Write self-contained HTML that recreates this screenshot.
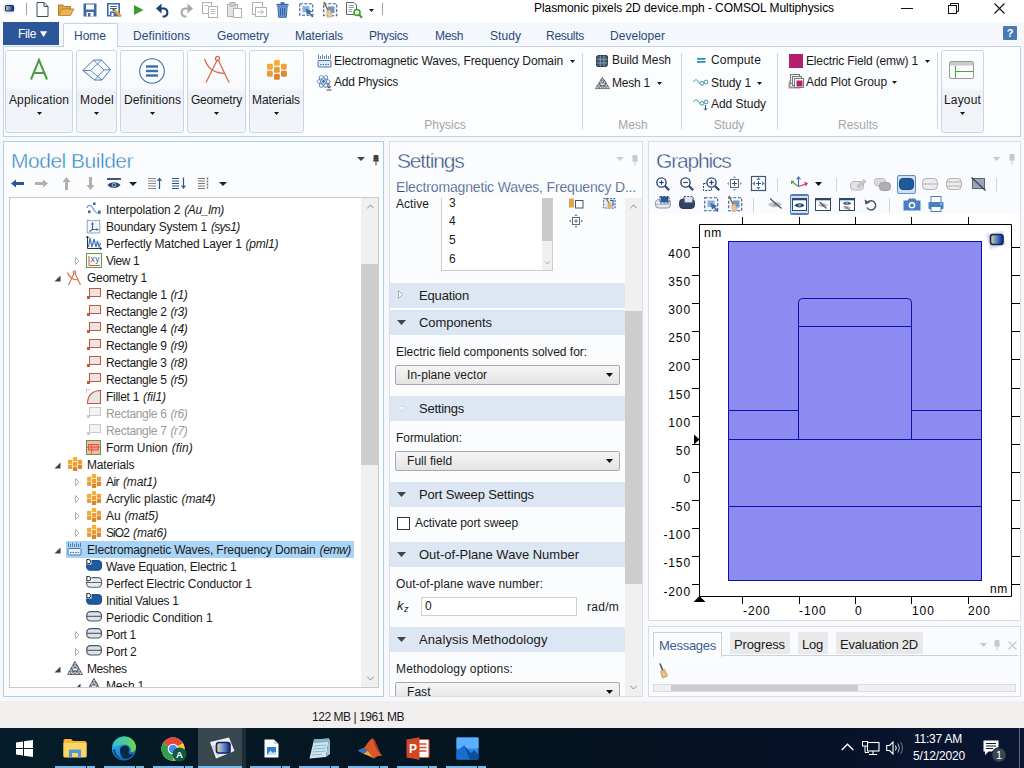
<!DOCTYPE html>
<html><head><meta charset="utf-8"><title>COMSOL</title>
<style>
html,body{margin:0;padding:0;}
body{width:1024px;height:768px;overflow:hidden;position:relative;background:#f6f8fc;font-family:"Liberation Sans",sans-serif;font-size:12px;color:#1a1a1a;}
body div,body svg{position:absolute;}
svg{overflow:visible;}
</style></head><body>
<div style="left:0px;top:0px;width:1024px;height:22px;background:#ffffff;"></div>
<svg style="left:2px;top:2px" width="14" height="13" viewBox="0 0 14 13"><defs><linearGradient id="lg1" x1="0" y1="0.5" x2="1" y2="0.5"><stop offset="0" stop-color="#f5e050"/><stop offset="0.45" stop-color="#5a8fd8"/><stop offset="1" stop-color="#16246a"/></linearGradient></defs><ellipse cx="7" cy="6.5" rx="6.8" ry="6" fill="#eceef3"/><rect x="3.5" y="3.5" width="8" height="5.5" rx="1.3" fill="url(#lg1)" stroke="#16246a" stroke-width="1.1"/></svg>
<div style="left:26px;top:3px;width:1px;height:12px;background:#9aa0a8;"></div>
<svg style="left:36px;top:2px" width="13" height="15" viewBox="0 0 13 15"><path d="M1 0.5H8L12 4.5V14.5H1Z" fill="#fff" stroke="#3b4a63" stroke-width="1"/><path d="M8 0.5V4.5H12" fill="none" stroke="#3b4a63" stroke-width="1"/></svg>
<svg style="left:58px;top:4px" width="17" height="12" viewBox="0 0 17 12"><path d="M0.5 11.5V1H5L6.5 2.5H12.5V5" fill="#e0a346" stroke="#b97a22" stroke-width="1"/><path d="M0.5 11.5L4 5H16L12.5 11.5Z" fill="#eab35a" stroke="#b97a22" stroke-width="0.8"/></svg>
<svg style="left:83px;top:3px" width="14" height="14" viewBox="0 0 14 14"><path d="M0.5 0.5H13.5V13.5H0.5Z" fill="#3e6aa8"/><rect x="3" y="1.5" width="8" height="5" fill="#fff"/><rect x="3.5" y="9" width="7" height="4.5" fill="#fff"/><rect x="5" y="10" width="2.5" height="3.5" fill="#3e6aa8"/></svg>
<svg style="left:107px;top:3px" width="16" height="15" viewBox="0 0 16 15"><path d="M0.8 0.8H12.2V12.7H0.8Z" fill="#fff" stroke="#3e6aa8" stroke-width="1.6"/><path d="M3 3.5H10M3 5.5H10" stroke="#3e6aa8" stroke-width="1"/><rect x="3" y="8.5" width="7" height="4.5" fill="#3e6aa8"/><rect x="4.5" y="10" width="2" height="3" fill="#fff"/><path d="M6.5 6.5L14 13.5" stroke="#e0a346" stroke-width="2.8"/><path d="M5 5L8.2 6L6 8.2Z" fill="#44566b"/></svg>
<svg style="left:134px;top:5px" width="10" height="10" viewBox="0 0 10 10"><path d="M0 0L9.5 5L0 10Z" fill="#3f9a2f"/></svg>
<svg style="left:156px;top:3px" width="14" height="14" viewBox="0 0 14 14"><path d="M3.5 5.5H8.5A4.2 4.2 0 0 1 8.5 13.5H6.5" fill="none" stroke="#1f3f77" stroke-width="2"/><path d="M0 5.5L5.5 0.5V10.5Z" fill="#1f3f77"/></svg>
<svg style="left:179px;top:3px" width="14" height="14" viewBox="0 0 14 14"><path d="M10.5 5.5H5.5A4.2 4.2 0 0 0 5.5 13.5H7.5" fill="none" stroke="#a9a9a9" stroke-width="2"/><path d="M14 5.5L8.5 0.5V10.5Z" fill="#a9a9a9"/></svg>
<svg style="left:202px;top:2px" width="17" height="16" viewBox="0 0 17 16"><rect x="0.5" y="0.5" width="9" height="11" fill="#fff" stroke="#b0b0b0"/><rect x="6.5" y="4.5" width="9" height="11" fill="#fff" stroke="#b0b0b0"/><path d="M8.5 7.5H13.5M8.5 9.5H13.5M8.5 11.5H13.5M2.5 3.5H6" stroke="#b8b8b8"/></svg>
<svg style="left:227px;top:2px" width="16" height="16" viewBox="0 0 16 16"><rect x="0.5" y="2.5" width="10" height="12" fill="#e4e4e4" stroke="#b0b0b0"/><rect x="3" y="0.5" width="5" height="3.5" fill="#d0d0d0" stroke="#b0b0b0"/><rect x="6.5" y="6.5" width="8" height="9" fill="#fff" stroke="#b0b0b0"/></svg>
<svg style="left:252px;top:2px" width="15" height="16" viewBox="0 0 15 16"><rect x="0.5" y="0.5" width="10" height="12" fill="#fff" stroke="#b0b0b0"/><rect x="3.5" y="5.5" width="11" height="9" fill="#fff" stroke="#b0b0b0"/><path d="M5.5 10H11M9 7.5L11.5 10L9 12.5" fill="none" stroke="#b0b0b0"/></svg>
<svg style="left:276px;top:2px" width="13" height="16" viewBox="0 0 13 16"><path d="M1.8 4.2H11.2L10.3 15.3H2.7Z" fill="#6d9ad2" stroke="#3e6aa8" stroke-width="1"/><rect x="0.5" y="1.8" width="12" height="1.8" fill="#3e6aa8"/><rect x="4.5" y="0.2" width="4" height="1.8" fill="#3e6aa8"/><path d="M4.5 6V13.5M6.5 6V13.5M8.5 6V13.5" stroke="#2f5a98" stroke-width="0.9"/></svg>
<svg style="left:299px;top:3px" width="16" height="15" viewBox="0 0 16 15"><rect x="0.7" y="0.7" width="13" height="11.5" fill="#f4f7fb" stroke="#3b5f95" stroke-width="1.1" stroke-dasharray="3 1.6"/><rect x="3.5" y="3.2" width="7" height="6" fill="#8fb0dc"/><path d="M6.5 5.5L13.5 8.5L11 9.5L14.5 13.5L13.2 14.5L9.8 10.5L8 12.3Z" fill="#3a68a8"/></svg>
<svg style="left:323px;top:1px" width="15" height="17" viewBox="0 0 15 17"><rect x="0.7" y="2.7" width="13" height="12" fill="#f4f7fb" stroke="#3b5f95" stroke-width="1.1" stroke-dasharray="3 1.6"/><rect x="5" y="5.5" width="6.5" height="6.5" fill="#6f96cc"/><path d="M0.8 0.8L5.5 10" stroke="#8a6a45" stroke-width="1.5"/><path d="M3.8 10L7 8.5L9.5 15.5L4.5 16.5Z" fill="#e9c79a" stroke="#c09a62" stroke-width="0.6"/></svg>
<svg style="left:346px;top:2px" width="17" height="17" viewBox="0 0 17 17"><path d="M0.5 0.5H8L10.5 3V12.5H0.5Z" fill="#fff" stroke="#5a6270"/><path d="M2.5 3.5H8M2.5 5.5H8M2.5 7.5H6M2.5 9.5H6" stroke="#7a8290" stroke-width="0.8"/><circle cx="11" cy="10.5" r="3" fill="#e9f5e4" stroke="#3f9a2f" stroke-width="1.5"/><path d="M13.2 12.8L16 15.8" stroke="#3f9a2f" stroke-width="2"/></svg>
<svg style="left:368.5px;top:8.5px" width="5" height="3" viewBox="0 0 5 3"><path d="M0 0H5L2.5 3Z" fill="#1a1a1a"/></svg>
<div style="left:382px;top:3px;width:1px;height:12px;background:#9aa0a8;"></div>
<div style="left:534px;top:-1.0px;height:18px;line-height:18px;font-size:12px;color:#000;white-space:nowrap;letter-spacing:-0.070px;">Plasmonic pixels 2D device.mph - COMSOL Multiphysics</div>
<div style="left:901px;top:8px;width:12px;height:1px;background:#111;"></div>
<svg style="left:948px;top:3px" width="11" height="11" viewBox="0 0 11 11"><path d="M2.5 2.5V0.5H10.5V8.5H8.5" fill="none" stroke="#111"/><rect x="0.5" y="2.5" width="8" height="8" fill="none" stroke="#111"/></svg>
<svg style="left:994px;top:3px" width="11" height="11" viewBox="0 0 11 11"><path d="M0.5 0.5L10.5 10.5M10.5 0.5L0.5 10.5" stroke="#111" stroke-width="1.1"/></svg>
<div style="left:0px;top:22px;width:1024px;height:24px;background:#f4f7fc;"></div>
<div style="left:3px;top:22px;width:56px;height:23px;background:#2b569a;"></div>
<div style="left:18px;top:25.0px;height:18px;line-height:18px;font-size:12px;color:#fff;white-space:nowrap;letter-spacing:-0.336px;">File</div>
<svg style="left:40px;top:31px" width="7" height="6" viewBox="0 0 7 6"><path d="M0 0.3H7.2L3.6 6Z" fill="#fff"/></svg>
<div style="left:63px;top:23px;width:55px;height:24px;background:#fcfdfe;border:1px solid #c3d2e6;box-sizing:border-box;border-bottom:none;border-radius:2px 2px 0 0;"></div>
<div style="left:74px;top:27.0px;height:18px;line-height:18px;font-size:12px;color:#2a4a7a;white-space:nowrap;letter-spacing:-0.004px;">Home</div>
<div style="left:133px;top:27.0px;height:18px;line-height:18px;font-size:12px;color:#2a4a7a;white-space:nowrap;letter-spacing:0.088px;">Definitions</div>
<div style="left:217px;top:27.0px;height:18px;line-height:18px;font-size:12px;color:#2a4a7a;white-space:nowrap;letter-spacing:-0.084px;">Geometry</div>
<div style="left:295px;top:27.0px;height:18px;line-height:18px;font-size:12px;color:#2a4a7a;white-space:nowrap;letter-spacing:-0.076px;">Materials</div>
<div style="left:369px;top:27.0px;height:18px;line-height:18px;font-size:12px;color:#2a4a7a;white-space:nowrap;letter-spacing:-0.335px;">Physics</div>
<div style="left:435px;top:27.0px;height:18px;line-height:18px;font-size:12px;color:#2a4a7a;white-space:nowrap;letter-spacing:-0.336px;">Mesh</div>
<div style="left:490px;top:27.0px;height:18px;line-height:18px;font-size:12px;color:#2a4a7a;white-space:nowrap;letter-spacing:0.066px;">Study</div>
<div style="left:546px;top:27.0px;height:18px;line-height:18px;font-size:12px;color:#2a4a7a;white-space:nowrap;letter-spacing:-0.288px;">Results</div>
<div style="left:610px;top:27.0px;height:18px;line-height:18px;font-size:12px;color:#2a4a7a;white-space:nowrap;letter-spacing:0.033px;">Developer</div>
<div style="left:1003px;top:26px;width:14px;height:14px;background:#4a7ab5;border-radius:1px;"></div>
<div style="left:860px;width:300px;text-align:center;top:24.5px;height:17px;line-height:17px;font-size:11px;color:#fff;white-space:nowrap;font-weight:bold;">?</div>
<div style="left:3px;top:46px;width:1018px;height:91px;background:#fcfdfe;border:1px solid #c3d2e6;box-sizing:border-box;z-index:0"></div>
<div style="left:64px;top:46px;width:53px;height:1px;background:#fcfdfe;"></div>
<div style="left:5px;top:50px;width:68px;height:83px;box-sizing:border-box;border:1px solid #c9d6ea;border-radius:3px;background:linear-gradient(#fdfeff 0%,#f7f9fc 45%,#eef1f7 50%,#f3f5f9 100%);"></div>
<div style="left:9px;top:91.0px;height:18px;line-height:18px;font-size:12px;color:#1a1a1a;white-space:nowrap;letter-spacing:0.118px;">Application</div>
<svg style="left:36.5px;top:111.5px" width="5" height="3" viewBox="0 0 5 3"><path d="M0 0H5L2.5 3Z" fill="#1a1a1a"/></svg>
<div style="left:76px;top:50px;width:41px;height:83px;box-sizing:border-box;border:1px solid #c9d6ea;border-radius:3px;background:linear-gradient(#fdfeff 0%,#f7f9fc 45%,#eef1f7 50%,#f3f5f9 100%);"></div>
<div style="left:80px;top:91.0px;height:18px;line-height:18px;font-size:12px;color:#1a1a1a;white-space:nowrap;letter-spacing:0.263px;">Model</div>
<svg style="left:94.0px;top:111.5px" width="5" height="3" viewBox="0 0 5 3"><path d="M0 0H5L2.5 3Z" fill="#1a1a1a"/></svg>
<div style="left:120px;top:50px;width:64px;height:83px;box-sizing:border-box;border:1px solid #c9d6ea;border-radius:3px;background:linear-gradient(#fdfeff 0%,#f7f9fc 45%,#eef1f7 50%,#f3f5f9 100%);"></div>
<div style="left:124px;top:91.0px;height:18px;line-height:18px;font-size:12px;color:#1a1a1a;white-space:nowrap;letter-spacing:0.088px;">Definitions</div>
<svg style="left:149.5px;top:111.5px" width="5" height="3" viewBox="0 0 5 3"><path d="M0 0H5L2.5 3Z" fill="#1a1a1a"/></svg>
<div style="left:187px;top:50px;width:59px;height:83px;box-sizing:border-box;border:1px solid #c9d6ea;border-radius:3px;background:linear-gradient(#fdfeff 0%,#f7f9fc 45%,#eef1f7 50%,#f3f5f9 100%);"></div>
<div style="left:191px;top:91.0px;height:18px;line-height:18px;font-size:12px;color:#1a1a1a;white-space:nowrap;letter-spacing:-0.209px;">Geometry</div>
<svg style="left:214.0px;top:111.5px" width="5" height="3" viewBox="0 0 5 3"><path d="M0 0H5L2.5 3Z" fill="#1a1a1a"/></svg>
<div style="left:249px;top:50px;width:55px;height:83px;box-sizing:border-box;border:1px solid #c9d6ea;border-radius:3px;background:linear-gradient(#fdfeff 0%,#f7f9fc 45%,#eef1f7 50%,#f3f5f9 100%);"></div>
<div style="left:252px;top:91.0px;height:18px;line-height:18px;font-size:12px;color:#1a1a1a;white-space:nowrap;letter-spacing:-0.076px;">Materials</div>
<svg style="left:274.0px;top:111.5px" width="5" height="3" viewBox="0 0 5 3"><path d="M0 0H5L2.5 3Z" fill="#1a1a1a"/></svg>
<div style="left:941px;top:50px;width:43px;height:83px;box-sizing:border-box;border:1px solid #c9d6ea;border-radius:3px;background:linear-gradient(#fdfeff 0%,#f7f9fc 45%,#eef1f7 50%,#f3f5f9 100%);"></div>
<div style="left:944px;top:91.0px;height:18px;line-height:18px;font-size:12px;color:#1a1a1a;white-space:nowrap;letter-spacing:0.164px;">Layout</div>
<svg style="left:960.0px;top:111.5px" width="5" height="3" viewBox="0 0 5 3"><path d="M0 0H5L2.5 3Z" fill="#1a1a1a"/></svg>
<svg style="left:30px;top:59px" width="19" height="22" viewBox="0 0 19 22"><path d="M1 20.5L9 1L17 20.5M3.8 14H14.2" fill="none" stroke="#4d9a42" stroke-width="2" stroke-linejoin="miter"/></svg>
<svg style="left:82px;top:59px" width="30" height="22" viewBox="0 0 30 22"><g fill="none" stroke="#4a78b0" stroke-width="1" stroke-linejoin="round"><path d="M0.8 11.5L11.5 1.2L19.5 1L28.5 10.5L20 21H12.5Z"/><path d="M0.8 11.5L8.5 11.5L20 21M8.5 11.5L19.5 1M11.5 1.2L22 11L28.5 10.5M22 11L12.5 21" stroke-width="0.9"/></g></svg>
<svg style="left:139px;top:58px" width="27" height="27" viewBox="0 0 27 27"><circle cx="13" cy="13" r="12.3" fill="#fdfeff" stroke="#3e6fb0" stroke-width="1.1"/><path d="M7 8.5H19M7 13H19M7 17.5H19" stroke="#3e6fb0" stroke-width="2.4"/></svg>
<svg style="left:203px;top:55px" width="30" height="30" viewBox="0 0 30 30"><g fill="none" stroke="#d9694a" stroke-width="1.3"><circle cx="14.5" cy="3.5" r="2"/><path d="M14 5.5L3 27.5M15.5 5.5L26 27.5"/><path d="M1.5 4C5 14 11 18 22 18.5"/></g></svg>
<svg style="left:267px;top:60px" width="21" height="21" viewBox="0 0 21 21"><rect x="7.00" y="0.00" width="5.8" height="5.8" rx="1.16" fill="#f5b030"/><rect x="0.00" y="3.85" width="5.8" height="5.8" rx="1.16" fill="#f3ab38"/><rect x="14.00" y="3.85" width="5.8" height="5.8" rx="1.16" fill="#f0a03c"/><rect x="7.00" y="7.00" width="5.8" height="5.8" rx="1.16" fill="#f09a36"/><rect x="0.00" y="10.85" width="5.8" height="5.8" rx="1.16" fill="#ec9a3a"/><rect x="14.00" y="10.85" width="5.8" height="5.8" rx="1.16" fill="#dc8a30"/><rect x="7.00" y="14.00" width="5.8" height="5.8" rx="1.16" fill="#dc8428"/></svg>
<svg style="left:949px;top:61px" width="26" height="19" viewBox="0 0 26 19"><rect x="0.5" y="0.5" width="24" height="17" rx="1.5" fill="#fbfbfb" stroke="#9a9a9a"/><rect x="1" y="1" width="23" height="3.5" fill="#c9c9c9"/><path d="M6.5 5V17M6.5 10.5H24" stroke="#4da546" stroke-width="1.1" fill="none"/></svg>
<div style="left:582px;top:53px;width:1px;height:76px;background:#d0d7e2;"></div>
<div style="left:681px;top:53px;width:1px;height:76px;background:#d0d7e2;"></div>
<div style="left:777px;top:53px;width:1px;height:76px;background:#d0d7e2;"></div>
<div style="left:937px;top:53px;width:1px;height:76px;background:#d0d7e2;"></div>
<svg style="left:317px;top:54px" width="15" height="14" viewBox="0 0 15 14"><g stroke="#4a78b0" fill="none"><path d="M1.5 0.5V5M3.5 2V5M5.5 0.5V5M7.5 2V5M9.5 0.5V5M11.5 2V5M13.5 0.5V5" stroke-width="0.9"/><rect x="1" y="6.5" width="13" height="6.5" rx="1" fill="#dfe9f6"/><path d="M3 10.5H12" stroke-dasharray="1.5 1"/></g></svg>
<div style="left:334px;top:52.0px;height:18px;line-height:18px;font-size:12px;color:#1a1a1a;white-space:nowrap;letter-spacing:-0.119px;">Electromagnetic Waves, Frequency Domain</div>
<svg style="left:569.5px;top:60.0px" width="5" height="3" viewBox="0 0 5 3"><path d="M0 0H5L2.5 3Z" fill="#1a1a1a"/></svg>
<svg style="left:316px;top:74px" width="17" height="17" viewBox="0 0 17 17"><g fill="none" stroke="#5b86b8" stroke-width="0.9"><ellipse cx="7.5" cy="7.5" rx="6.5" ry="2.6"/><ellipse cx="7.5" cy="7.5" rx="6.5" ry="2.6" transform="rotate(60 7.5 7.5)"/><ellipse cx="7.5" cy="7.5" rx="6.5" ry="2.6" transform="rotate(-60 7.5 7.5)"/></g><circle cx="7.5" cy="7.5" r="1.4" fill="#3e6aa8"/><path d="M13 9V14M11 12.2L13 14.2L15 12.2M10.5 16H15.5" stroke="#444" fill="none" stroke-width="1"/></svg>
<div style="left:334px;top:73.0px;height:18px;line-height:18px;font-size:12px;color:#1a1a1a;white-space:nowrap;letter-spacing:-0.183px;">Add Physics</div>
<div style="left:295px;width:300px;text-align:center;top:116.0px;height:18px;line-height:18px;font-size:12px;color:#a6a6a6;white-space:nowrap;">Physics</div>
<svg style="left:596px;top:55px" width="12" height="12" viewBox="0 0 12 12"><path d="M0.5 2.5Q0.5 0.5 2.5 0.5H10Q11.5 0.5 11.5 2V9.5Q11.5 11.5 9.5 11.5H2Q0.5 11.5 0.5 10Z" fill="#44566b" stroke="#2d3b4d"/><path d="M4.3 0.5V11.5M8 0.5V11.5M0.5 4.3H11.5M0.5 8H11.5" stroke="#93a6bc" stroke-width="0.8"/></svg>
<div style="left:612px;top:51.0px;height:18px;line-height:18px;font-size:12px;color:#1a1a1a;white-space:nowrap;letter-spacing:-0.036px;">Build Mesh</div>
<svg style="left:594.5px;top:76.5px" width="15" height="12" viewBox="0 0 15 12"><g fill="none" stroke="#555e6b" stroke-width="0.8"><path d="M7.5 0.4L14.6 11.6H0.4Z" fill="#e6e9ee"/><path d="M3.95 6H11.05L7.5 11.6L3.95 6M7.5 0.4L5.7 3.2H9.3L7.5 6L5.7 3.2M9.3 3.2L11.05 6L9.3 8.8H5.7L3.95 6M2.2 8.8H12.8M2.2 8.8L3.95 11.6L5.7 8.8M9.3 8.8L11.05 11.6L12.8 8.8"/></g></svg>
<div style="left:612px;top:74.0px;height:18px;line-height:18px;font-size:12px;color:#1a1a1a;white-space:nowrap;letter-spacing:-0.224px;">Mesh 1</div>
<svg style="left:656.5px;top:82.0px" width="5" height="3" viewBox="0 0 5 3"><path d="M0 0H5L2.5 3Z" fill="#1a1a1a"/></svg>
<div style="left:483px;width:300px;text-align:center;top:116.0px;height:18px;line-height:18px;font-size:12px;color:#a6a6a6;white-space:nowrap;">Mesh</div>
<svg style="left:697px;top:58px" width="9" height="6" viewBox="0 0 9 6"><path d="M0 0.9H8.5M0 3.8H8.5" stroke="#2a8fb5" stroke-width="1.7"/></svg>
<div style="left:711px;top:51.0px;height:18px;line-height:18px;font-size:12px;color:#1a1a1a;white-space:nowrap;letter-spacing:0.188px;">Compute</div>
<svg style="left:693px;top:77px" width="17" height="17" viewBox="0 0 17 17"><g fill="none" stroke="#3a9aa8" stroke-width="1"><path d="M0.5 5C2 2 4 2 5.5 5C6 6 6.5 6.5 7 6.5"/><circle cx="9" cy="6.3" r="1.9"/><circle cx="13" cy="5" r="1.9"/></g></svg>
<div style="left:711px;top:74.0px;height:18px;line-height:18px;font-size:12px;color:#1a1a1a;white-space:nowrap;letter-spacing:-0.096px;">Study 1</div>
<svg style="left:756.5px;top:82.0px" width="5" height="3" viewBox="0 0 5 3"><path d="M0 0H5L2.5 3Z" fill="#1a1a1a"/></svg>
<svg style="left:693px;top:97px" width="17" height="17" viewBox="0 0 17 17"><g fill="none" stroke="#3a9aa8" stroke-width="1"><path d="M0.5 5C2 2 4 2 5.5 5C6 6 6.5 6.5 7 6.5"/><circle cx="9" cy="6.3" r="1.9"/><circle cx="13" cy="5" r="1.9"/></g><path d="M12.5 8V13M10.9 11.3L12.5 13.2L14.1 11.3" stroke="#44566b" fill="none" stroke-width="1"/></svg>
<div style="left:711px;top:95.0px;height:18px;line-height:18px;font-size:12px;color:#1a1a1a;white-space:nowrap;letter-spacing:-0.038px;">Add Study</div>
<div style="left:579px;width:300px;text-align:center;top:116.0px;height:18px;line-height:18px;font-size:12px;color:#a6a6a6;white-space:nowrap;">Study</div>
<div style="left:789px;top:54px;width:14px;height:14px;background:#b5206e;"></div>
<div style="left:806px;top:52.0px;height:18px;line-height:18px;font-size:12px;color:#1a1a1a;white-space:nowrap;letter-spacing:-0.153px;">Electric Field (emw) 1</div>
<svg style="left:924.5px;top:60.0px" width="5" height="3" viewBox="0 0 5 3"><path d="M0 0H5L2.5 3Z" fill="#1a1a1a"/></svg>
<svg style="left:788px;top:74px" width="16" height="15" viewBox="0 0 16 15"><path d="M0.5 9.5L2.5 4.5V12.5H12V14.5H0.5Z" fill="#9a9a9a"/><rect x="2.5" y="0.5" width="9" height="9" fill="#f2f2f2" stroke="#7a7a7a"/><rect x="4.5" y="2.5" width="9" height="9" fill="#f2f2f2" stroke="#7a7a7a"/><rect x="6.5" y="4.5" width="9" height="9" fill="#fff" stroke="#7a7a7a"/><rect x="8.5" y="6.5" width="6" height="6" fill="#b5206e"/></svg>
<div style="left:806px;top:73.0px;height:18px;line-height:18px;font-size:12px;color:#1a1a1a;white-space:nowrap;letter-spacing:-0.073px;">Add Plot Group</div>
<svg style="left:891.5px;top:81.0px" width="5" height="3" viewBox="0 0 5 3"><path d="M0 0H5L2.5 3Z" fill="#1a1a1a"/></svg>
<div style="left:708px;width:300px;text-align:center;top:116.0px;height:18px;line-height:18px;font-size:12px;color:#a6a6a6;white-space:nowrap;">Results</div>
<div style="left:3px;top:141px;width:381px;height:556px;background:#fbfcfe;border:1px solid #aecdea;box-sizing:border-box;"></div>
<div style="left:11px;top:146.5px;height:27px;line-height:27px;font-size:21px;color:#2a84c2;white-space:nowrap;letter-spacing:-0.490px;-webkit-text-stroke:0.45px #fbfcfe;">Model Builder</div>
<svg style="left:357.0px;top:157.0px" width="8" height="4" viewBox="0 0 8 4"><path d="M0 0H8L4.0 4Z" fill="#444"/></svg>
<svg style="left:372.5px;top:154.5px" width="6" height="11" viewBox="0 0 6 11"><path d="M1 0.5H5V5.5H1ZM0 6H6M3 6V10.5" stroke="#444" fill="#444" stroke-width="1"/></svg>
<svg style="left:11px;top:179px" width="13" height="13" viewBox="0 0 13 13"><path d="M0 4.5L5 0.5V3H13V6H5V8.5Z" fill="#2d5596"/></svg>
<svg style="left:35px;top:179px" width="13" height="13" viewBox="0 0 13 13"><path d="M13 4.5L8 0.5V3H0V6H8V8.5Z" fill="#b0b0b0"/></svg>
<svg style="left:62px;top:177px" width="13" height="13" viewBox="0 0 13 13"><path d="M4.5 0L0.5 5H3V13H6V5H8.5Z" fill="#b0b0b0"/></svg>
<svg style="left:86px;top:177px" width="13" height="13" viewBox="0 0 13 13"><path d="M4.5 13L0.5 8H3V0H6V8H8.5Z" fill="#b0b0b0"/></svg>
<svg style="left:107px;top:178px" width="14" height="11" viewBox="0 0 14 11"><path d="M0 1H14" stroke="#2b4770" stroke-width="1.8"/><path d="M0.5 7C3.5 3.2 10.5 3.2 13.5 7C10.5 10.8 3.5 10.8 0.5 7Z" fill="#2b4770"/><circle cx="7" cy="7" r="2.3" fill="#8fa8cc"/><circle cx="7" cy="7" r="1.2" fill="#2b4770"/></svg>
<svg style="left:129.0px;top:182.0px" width="8" height="4" viewBox="0 0 8 4"><path d="M0 0H8L4.0 4Z" fill="#222"/></svg>
<svg style="left:148px;top:177px" width="14" height="12" viewBox="0 0 14 12"><path d="M0 1.5H8M0 4H8M0 6.5H8M0 9H8M0 11.5H8" stroke="#8a8a8a" stroke-width="1"/><path d="M11.5 12V2M9.5 4L11.5 1.5L13.5 4" stroke="#2d5596" fill="none" stroke-width="1.2"/></svg>
<svg style="left:172px;top:177px" width="14" height="12" viewBox="0 0 14 12"><path d="M0 1.5H8M0 4H8M0 6.5H8M0 9H8M0 11.5H8" stroke="#2d5596" stroke-width="1.2" stroke-dasharray="7 1"/><path d="M11.5 0.5V10.5M9.5 8.5L11.5 11L13.5 8.5" stroke="#2d5596" fill="none" stroke-width="1.2"/></svg>
<svg style="left:198px;top:177px" width="11" height="12" viewBox="0 0 11 12"><path d="M0 1.5H7M0 4H7M0 6.5H7M0 9H7M0 11.5H7" stroke="#777" stroke-width="1"/><path d="M9.5 0.5V12" stroke="#777" stroke-width="1.5" stroke-dasharray="2 1"/></svg>
<svg style="left:218.5px;top:182.0px" width="8" height="4" viewBox="0 0 8 4"><path d="M0 0H8L4.0 4Z" fill="#222"/></svg>
<div style="left:9px;top:197px;width:370px;height:491px;background:#ffffff;border:1px solid #c6cad0;box-sizing:border-box;"></div>
<div style="left:361px;top:198px;width:17px;height:489px;background:#f0f0f0;"></div>
<div style="left:361px;top:264px;width:17px;height:201px;background:#cdcdcd;"></div>
<svg style="left:366.5px;top:204px" width="7" height="5" viewBox="0 0 7 5"><path d="M0.3 4.2L3.5 1L6.7 4.2" fill="none" stroke="#8a8a8a" stroke-width="1"/></svg>
<svg style="left:366.5px;top:676px" width="7" height="5" viewBox="0 0 7 5"><path d="M0.3 0.8L3.5 4L6.7 0.8" fill="none" stroke="#8a8a8a" stroke-width="1"/></svg>
<div style="left:10px;top:198px;width:351px;height:489px;overflow:hidden">
<svg style="left:76px;top:4px" width="16" height="14" viewBox="0 0 16 14"><path d="M0.5 6C2 3 4.5 2.5 6.5 5.5C8.5 9 10 12 15 11.5" fill="none" stroke="#7aa3d4" stroke-width="1.3"/><rect x="7" y="0.5" width="2.6" height="2.6" fill="#3e6aa8"/><rect x="2" y="8.5" width="2.6" height="2.6" fill="#3e6aa8"/><rect x="12" y="8.5" width="2.6" height="2.6" fill="#3e6aa8"/></svg>
<div style="left:96px;top:3.1px;height:18px;line-height:18px;font-size:12px;color:#1a1a1a;white-space:nowrap;letter-spacing:-0.115px;">Interpolation 2</div>
<div style="left:174.3px;top:3.1px;height:18px;line-height:18px;font-size:12px;color:#1a1a1a;white-space:nowrap;letter-spacing:-0.439px;font-style:italic;">(Au_Im)</div>
<svg style="left:76px;top:21px" width="15" height="15" viewBox="0 0 15 15"><path d="M1.5 1C1 5 1 10 1.5 14H13.5C14 10 14 5 13.5 1C10 2 5 2 1.5 1Z" fill="#f4f6fa" stroke="#8b97a8" stroke-width="0.9"/><path d="M6.5 4.5V10.5H11.5" fill="none" stroke="#3e6aa8" stroke-width="1.2"/><path d="M6.5 3L5 5.5H8ZM13 10.5L10.5 9V12Z" fill="#3e6aa8"/><path d="M6.5 10.5L3.5 12.5" stroke="#3e6aa8" stroke-width="1.1"/></svg>
<div style="left:96px;top:20.1px;height:18px;line-height:18px;font-size:12px;color:#1a1a1a;white-space:nowrap;letter-spacing:-0.223px;">Boundary System 1</div>
<div style="left:200.9px;top:20.1px;height:18px;line-height:18px;font-size:12px;color:#1a1a1a;white-space:nowrap;letter-spacing:-0.679px;font-style:italic;">(sys1)</div>
<svg style="left:76px;top:38px" width="16" height="15" viewBox="0 0 16 15"><path d="M1.5 0V12.5M1.5 12.5H15.5" stroke="#333" stroke-width="1" fill="none"/><path d="M2.5 11L4 2L6 11L8 3L10 11L11.5 5L13 11L14.5 7" fill="none" stroke="#3e78c0" stroke-width="1.2"/><path d="M0 2L1.5 0L3 2M14 11L15.8 12.5L14 14" fill="none" stroke="#333" stroke-width="0.8"/></svg>
<div style="left:96px;top:37.1px;height:18px;line-height:18px;font-size:12px;color:#1a1a1a;white-space:nowrap;letter-spacing:-0.150px;">Perfectly Matched Layer 1</div>
<div style="left:235.6px;top:37.1px;height:18px;line-height:18px;font-size:12px;color:#1a1a1a;white-space:nowrap;letter-spacing:-0.219px;font-style:italic;">(pml1)</div>
<svg style="left:65px;top:58.5px" width="5" height="8" viewBox="0 0 5 8"><path d="M0.5 0.5L4 4L0.5 7.5Z" fill="#fff" stroke="#a6a6a6" stroke-width="0.9"/></svg>
<svg style="left:76px;top:55px" width="16" height="15" viewBox="0 0 16 15"><rect x="0.5" y="0.5" width="15" height="14" fill="#f8fbf6" stroke="#5a9a4a" stroke-width="1"/><path d="M3 3V12.5H14" fill="none" stroke="#c8553d" stroke-width="1"/><text x="4.5" y="9" font-size="8.5" fill="#3e5a9a" font-family="Liberation Sans" letter-spacing="0.5">xy</text></svg>
<div style="left:96px;top:54.1px;height:18px;line-height:18px;font-size:12px;color:#1a1a1a;white-space:nowrap;letter-spacing:-0.449px;">View 1</div>
<svg style="left:44px;top:76.5px" width="7" height="7" viewBox="0 0 7 7"><path d="M6.5 0.5V6.5H0.5Z" fill="#404040"/></svg>
<svg style="left:57px;top:72px" width="15" height="16" viewBox="0 0 15 16"><g fill="none" stroke="#d9694a" stroke-width="1.1"><circle cx="7.5" cy="2" r="1.3"/><path d="M7 3.3L1.5 15M8 3.3L13.5 15"/><path d="M0.5 2.5C2.5 8 6 10 11.5 10"/></g></svg>
<div style="left:77px;top:71.1px;height:18px;line-height:18px;font-size:12px;color:#1a1a1a;white-space:nowrap;letter-spacing:-0.287px;">Geometry 1</div>
<svg style="left:76px;top:89px" width="15" height="13" viewBox="0 0 15 13"><rect x="3.5" y="1.5" width="11" height="8" fill="#ece4e2" stroke="#c8553d" stroke-width="1"/><rect x="1" y="9" width="3" height="3" fill="#c8553d"/></svg>
<div style="left:96px;top:88.1px;height:18px;line-height:18px;font-size:12px;color:#1a1a1a;white-space:nowrap;letter-spacing:-0.321px;">Rectangle 1</div>
<div style="left:160.5px;top:88.1px;height:18px;line-height:18px;font-size:12px;color:#1a1a1a;white-space:nowrap;letter-spacing:-0.468px;font-style:italic;">(r1)</div>
<svg style="left:76px;top:106px" width="15" height="13" viewBox="0 0 15 13"><rect x="3.5" y="1.5" width="11" height="8" fill="#ece4e2" stroke="#c8553d" stroke-width="1"/><rect x="1" y="9" width="3" height="3" fill="#c8553d"/></svg>
<div style="left:96px;top:105.1px;height:18px;line-height:18px;font-size:12px;color:#1a1a1a;white-space:nowrap;letter-spacing:-0.321px;">Rectangle 2</div>
<div style="left:160.5px;top:105.1px;height:18px;line-height:18px;font-size:12px;color:#1a1a1a;white-space:nowrap;letter-spacing:-0.468px;font-style:italic;">(r3)</div>
<svg style="left:76px;top:123px" width="15" height="13" viewBox="0 0 15 13"><rect x="3.5" y="1.5" width="11" height="8" fill="#ece4e2" stroke="#c8553d" stroke-width="1"/><rect x="1" y="9" width="3" height="3" fill="#c8553d"/></svg>
<div style="left:96px;top:122.1px;height:18px;line-height:18px;font-size:12px;color:#1a1a1a;white-space:nowrap;letter-spacing:-0.321px;">Rectangle 4</div>
<div style="left:160.5px;top:122.1px;height:18px;line-height:18px;font-size:12px;color:#1a1a1a;white-space:nowrap;letter-spacing:-0.468px;font-style:italic;">(r4)</div>
<svg style="left:76px;top:140px" width="15" height="13" viewBox="0 0 15 13"><rect x="3.5" y="1.5" width="11" height="8" fill="#ece4e2" stroke="#c8553d" stroke-width="1"/><rect x="1" y="9" width="3" height="3" fill="#c8553d"/></svg>
<div style="left:96px;top:139.1px;height:18px;line-height:18px;font-size:12px;color:#1a1a1a;white-space:nowrap;letter-spacing:-0.321px;">Rectangle 9</div>
<div style="left:160.5px;top:139.1px;height:18px;line-height:18px;font-size:12px;color:#1a1a1a;white-space:nowrap;letter-spacing:-0.468px;font-style:italic;">(r9)</div>
<svg style="left:76px;top:157px" width="15" height="13" viewBox="0 0 15 13"><rect x="3.5" y="1.5" width="11" height="8" fill="#ece4e2" stroke="#c8553d" stroke-width="1"/><rect x="1" y="9" width="3" height="3" fill="#c8553d"/></svg>
<div style="left:96px;top:156.1px;height:18px;line-height:18px;font-size:12px;color:#1a1a1a;white-space:nowrap;letter-spacing:-0.321px;">Rectangle 3</div>
<div style="left:160.5px;top:156.1px;height:18px;line-height:18px;font-size:12px;color:#1a1a1a;white-space:nowrap;letter-spacing:-0.468px;font-style:italic;">(r8)</div>
<svg style="left:76px;top:174px" width="15" height="13" viewBox="0 0 15 13"><rect x="3.5" y="1.5" width="11" height="8" fill="#ece4e2" stroke="#c8553d" stroke-width="1"/><rect x="1" y="9" width="3" height="3" fill="#c8553d"/></svg>
<div style="left:96px;top:173.1px;height:18px;line-height:18px;font-size:12px;color:#1a1a1a;white-space:nowrap;letter-spacing:-0.321px;">Rectangle 5</div>
<div style="left:160.5px;top:173.1px;height:18px;line-height:18px;font-size:12px;color:#1a1a1a;white-space:nowrap;letter-spacing:-0.468px;font-style:italic;">(r5)</div>
<svg style="left:76px;top:191px" width="15" height="15" viewBox="0 0 15 15"><path d="M1.5 14.5C1.5 6.5 6.5 1.5 14.5 1.5V14.5Z" fill="#e6e6e6" stroke="#c8553d" stroke-width="1.1"/><path d="M0.5 0.5V4.5M0.5 0.5H4.5" stroke="#888" stroke-width="0.8" stroke-dasharray="1 1" fill="none"/></svg>
<div style="left:96px;top:190.1px;height:18px;line-height:18px;font-size:12px;color:#1a1a1a;white-space:nowrap;letter-spacing:-0.280px;">Fillet 1</div>
<div style="left:133.1px;top:190.1px;height:18px;line-height:18px;font-size:12px;color:#1a1a1a;white-space:nowrap;letter-spacing:-0.091px;font-style:italic;">(fil1)</div>
<svg style="left:76px;top:208px" width="15" height="13" viewBox="0 0 15 13"><rect x="3.5" y="1.5" width="11" height="8" fill="#f2f2f2" stroke="#c9c9c9" stroke-width="1"/><rect x="1" y="9" width="3" height="3" fill="#c9c9c9"/></svg>
<div style="left:96px;top:207.1px;height:18px;line-height:18px;font-size:12px;color:#9a9a9a;white-space:nowrap;letter-spacing:-0.321px;">Rectangle 6</div>
<div style="left:160.5px;top:207.1px;height:18px;line-height:18px;font-size:12px;color:#9a9a9a;white-space:nowrap;letter-spacing:-0.468px;font-style:italic;">(r6)</div>
<svg style="left:76px;top:225px" width="15" height="13" viewBox="0 0 15 13"><rect x="3.5" y="1.5" width="11" height="8" fill="#f2f2f2" stroke="#c9c9c9" stroke-width="1"/><rect x="1" y="9" width="3" height="3" fill="#c9c9c9"/></svg>
<div style="left:96px;top:224.1px;height:18px;line-height:18px;font-size:12px;color:#9a9a9a;white-space:nowrap;letter-spacing:-0.321px;">Rectangle 7</div>
<div style="left:160.5px;top:224.1px;height:18px;line-height:18px;font-size:12px;color:#9a9a9a;white-space:nowrap;letter-spacing:-0.468px;font-style:italic;">(r7)</div>
<svg style="left:76px;top:242px" width="15" height="15" viewBox="0 0 15 15"><rect x="0.5" y="0.5" width="14" height="14" fill="#f5b8aa" stroke="#5a9a4a" stroke-width="1"/><rect x="2.5" y="4.5" width="10" height="5.5" fill="#f09a88" stroke="#d9543a" stroke-width="0.9"/><path d="M5.5 4.5V14M1 7.2H14" stroke="#d9543a" stroke-width="0.8"/></svg>
<div style="left:96px;top:241.1px;height:18px;line-height:18px;font-size:12px;color:#1a1a1a;white-space:nowrap;letter-spacing:-0.099px;">Form Union</div>
<div style="left:161.7px;top:241.1px;height:18px;line-height:18px;font-size:12px;color:#1a1a1a;white-space:nowrap;letter-spacing:0.086px;font-style:italic;">(fin)</div>
<svg style="left:44px;top:263.5px" width="7" height="7" viewBox="0 0 7 7"><path d="M6.5 0.5V6.5H0.5Z" fill="#404040"/></svg>
<svg style="left:58px;top:259px" width="15" height="15" viewBox="0 0 15 15"><rect x="4.90" y="0.00" width="4.3" height="4.3" rx="0.86" fill="#f5b030"/><rect x="0.00" y="2.70" width="4.3" height="4.3" rx="0.86" fill="#f3ab38"/><rect x="9.80" y="2.70" width="4.3" height="4.3" rx="0.86" fill="#f0a03c"/><rect x="4.90" y="4.90" width="4.3" height="4.3" rx="0.86" fill="#f09a36"/><rect x="0.00" y="7.60" width="4.3" height="4.3" rx="0.86" fill="#ec9a3a"/><rect x="9.80" y="7.60" width="4.3" height="4.3" rx="0.86" fill="#dc8a30"/><rect x="4.90" y="9.80" width="4.3" height="4.3" rx="0.86" fill="#dc8428"/></svg>
<div style="left:77px;top:258.1px;height:18px;line-height:18px;font-size:12px;color:#1a1a1a;white-space:nowrap;letter-spacing:-0.154px;">Materials</div>
<svg style="left:65px;top:279.5px" width="5" height="8" viewBox="0 0 5 8"><path d="M0.5 0.5L4 4L0.5 7.5Z" fill="#fff" stroke="#a6a6a6" stroke-width="0.9"/></svg>
<svg style="left:77px;top:276px" width="15" height="15" viewBox="0 0 15 15"><rect x="4.90" y="0.00" width="4.3" height="4.3" rx="0.86" fill="#f5b030"/><rect x="0.00" y="2.70" width="4.3" height="4.3" rx="0.86" fill="#f3ab38"/><rect x="9.80" y="2.70" width="4.3" height="4.3" rx="0.86" fill="#f0a03c"/><rect x="4.90" y="4.90" width="4.3" height="4.3" rx="0.86" fill="#f09a36"/><rect x="0.00" y="7.60" width="4.3" height="4.3" rx="0.86" fill="#ec9a3a"/><rect x="9.80" y="7.60" width="4.3" height="4.3" rx="0.86" fill="#dc8a30"/><rect x="4.90" y="9.80" width="4.3" height="4.3" rx="0.86" fill="#dc8428"/></svg>
<div style="left:96px;top:275.1px;height:18px;line-height:18px;font-size:12px;color:#1a1a1a;white-space:nowrap;letter-spacing:-0.591px;">Air</div>
<div style="left:112.9px;top:275.1px;height:18px;line-height:18px;font-size:12px;color:#1a1a1a;white-space:nowrap;letter-spacing:-0.112px;font-style:italic;">(mat1)</div>
<svg style="left:65px;top:296.5px" width="5" height="8" viewBox="0 0 5 8"><path d="M0.5 0.5L4 4L0.5 7.5Z" fill="#fff" stroke="#a6a6a6" stroke-width="0.9"/></svg>
<svg style="left:77px;top:293px" width="15" height="15" viewBox="0 0 15 15"><rect x="4.90" y="0.00" width="4.3" height="4.3" rx="0.86" fill="#f5b030"/><rect x="0.00" y="2.70" width="4.3" height="4.3" rx="0.86" fill="#f3ab38"/><rect x="9.80" y="2.70" width="4.3" height="4.3" rx="0.86" fill="#f0a03c"/><rect x="4.90" y="4.90" width="4.3" height="4.3" rx="0.86" fill="#f09a36"/><rect x="0.00" y="7.60" width="4.3" height="4.3" rx="0.86" fill="#ec9a3a"/><rect x="9.80" y="7.60" width="4.3" height="4.3" rx="0.86" fill="#dc8a30"/><rect x="4.90" y="9.80" width="4.3" height="4.3" rx="0.86" fill="#dc8428"/></svg>
<div style="left:96px;top:292.1px;height:18px;line-height:18px;font-size:12px;color:#1a1a1a;white-space:nowrap;letter-spacing:-0.079px;">Acrylic plastic</div>
<div style="left:171.5px;top:292.1px;height:18px;line-height:18px;font-size:12px;color:#1a1a1a;white-space:nowrap;letter-spacing:-0.112px;font-style:italic;">(mat4)</div>
<svg style="left:65px;top:313.5px" width="5" height="8" viewBox="0 0 5 8"><path d="M0.5 0.5L4 4L0.5 7.5Z" fill="#fff" stroke="#a6a6a6" stroke-width="0.9"/></svg>
<svg style="left:77px;top:310px" width="15" height="15" viewBox="0 0 15 15"><rect x="4.90" y="0.00" width="4.3" height="4.3" rx="0.86" fill="#f5b030"/><rect x="0.00" y="2.70" width="4.3" height="4.3" rx="0.86" fill="#f3ab38"/><rect x="9.80" y="2.70" width="4.3" height="4.3" rx="0.86" fill="#f0a03c"/><rect x="4.90" y="4.90" width="4.3" height="4.3" rx="0.86" fill="#f09a36"/><rect x="0.00" y="7.60" width="4.3" height="4.3" rx="0.86" fill="#ec9a3a"/><rect x="9.80" y="7.60" width="4.3" height="4.3" rx="0.86" fill="#dc8a30"/><rect x="4.90" y="9.80" width="4.3" height="4.3" rx="0.86" fill="#dc8428"/></svg>
<div style="left:96px;top:309.1px;height:18px;line-height:18px;font-size:12px;color:#1a1a1a;white-space:nowrap;letter-spacing:-0.110px;">Au</div>
<div style="left:114.451796875px;top:309.1px;height:18px;line-height:18px;font-size:12px;color:#1a1a1a;white-space:nowrap;letter-spacing:-0.112px;font-style:italic;">(mat5)</div>
<svg style="left:65px;top:330.5px" width="5" height="8" viewBox="0 0 5 8"><path d="M0.5 0.5L4 4L0.5 7.5Z" fill="#fff" stroke="#a6a6a6" stroke-width="0.9"/></svg>
<svg style="left:77px;top:327px" width="15" height="15" viewBox="0 0 15 15"><rect x="4.90" y="0.00" width="4.3" height="4.3" rx="0.86" fill="#f5b030"/><rect x="0.00" y="2.70" width="4.3" height="4.3" rx="0.86" fill="#f3ab38"/><rect x="9.80" y="2.70" width="4.3" height="4.3" rx="0.86" fill="#f0a03c"/><rect x="4.90" y="4.90" width="4.3" height="4.3" rx="0.86" fill="#f09a36"/><rect x="0.00" y="7.60" width="4.3" height="4.3" rx="0.86" fill="#ec9a3a"/><rect x="9.80" y="7.60" width="4.3" height="4.3" rx="0.86" fill="#dc8a30"/><rect x="4.90" y="9.80" width="4.3" height="4.3" rx="0.86" fill="#dc8428"/></svg>
<div style="left:96px;top:326.1px;height:18px;line-height:18px;font-size:12px;color:#1a1a1a;white-space:nowrap;letter-spacing:-0.918px;">SiO2</div>
<div style="left:123px;top:326.1px;height:18px;line-height:18px;font-size:12px;color:#1a1a1a;white-space:nowrap;letter-spacing:-0.112px;font-style:italic;">(mat6)</div>
<div style="left:56px;top:343px;width:288px;height:17px;background:#a8d4f8;"></div>
<svg style="left:44px;top:348.5px" width="7" height="7" viewBox="0 0 7 7"><path d="M6.5 0.5V6.5H0.5Z" fill="#404040"/></svg>
<svg style="left:57px;top:344px" width="15" height="14" viewBox="0 0 15 14"><g stroke="#4a78b0" fill="none"><path d="M1.5 0.5V5M3.5 2V5M5.5 0.5V5M7.5 2V5M9.5 0.5V5M11.5 2V5M13.5 0.5V5" stroke-width="0.9"/><rect x="1" y="6.5" width="13" height="6.5" rx="1" fill="#e6eef9"/><path d="M3 10.5H12" stroke-dasharray="1.5 1"/></g></svg>
<div style="left:77px;top:343.1px;height:18px;line-height:18px;font-size:12px;color:#1a1a1a;white-space:nowrap;letter-spacing:-0.129px;">Electromagnetic Waves, Frequency Domain</div>
<div style="left:309.6px;top:343.1px;height:18px;line-height:18px;font-size:12px;color:#1a1a1a;white-space:nowrap;letter-spacing:-0.409px;font-style:italic;">(emw)</div>
<svg style="left:76px;top:361px" width="16" height="14" viewBox="0 0 16 14"><rect x="0.6" y="1.6" width="15" height="9.6" rx="3.6" fill="#1f5a9e" stroke="#1a4f90" stroke-width="1.1"/><rect x="-0.5" y="-0.5" width="6" height="6" fill="#fff"/><path d="M0.8 0.5H2.8Q4.6 0.5 4.6 2.6Q4.6 4.8 2.8 4.8H0.8Z" fill="none" stroke="#222" stroke-width="1"/></svg>
<div style="left:96px;top:360.1px;height:18px;line-height:18px;font-size:12px;color:#1a1a1a;white-space:nowrap;letter-spacing:-0.257px;">Wave Equation, Electric 1</div>
<svg style="left:76px;top:378px" width="16" height="14" viewBox="0 0 16 14"><rect x="0.6" y="1.6" width="15" height="9.6" rx="3.6" fill="#e9edf2" stroke="#5a6575" stroke-width="1.1"/><path d="M0.6 6.5H15.6" stroke="#5a6575" stroke-width="1"/><rect x="-0.5" y="-0.5" width="6" height="6" fill="#fff"/><path d="M0.8 0.5H2.8Q4.6 0.5 4.6 2.6Q4.6 4.8 2.8 4.8H0.8Z" fill="none" stroke="#222" stroke-width="1"/></svg>
<div style="left:96px;top:377.1px;height:18px;line-height:18px;font-size:12px;color:#1a1a1a;white-space:nowrap;letter-spacing:-0.127px;">Perfect Electric Conductor 1</div>
<svg style="left:76px;top:395px" width="16" height="14" viewBox="0 0 16 14"><rect x="0.6" y="1.6" width="15" height="9.6" rx="3.6" fill="#1f5a9e" stroke="#1a4f90" stroke-width="1.1"/><rect x="-0.5" y="-0.5" width="6" height="6" fill="#fff"/><path d="M0.8 0.5H2.8Q4.6 0.5 4.6 2.6Q4.6 4.8 2.8 4.8H0.8Z" fill="none" stroke="#222" stroke-width="1"/></svg>
<div style="left:96px;top:394.1px;height:18px;line-height:18px;font-size:12px;color:#1a1a1a;white-space:nowrap;letter-spacing:-0.278px;">Initial Values 1</div>
<svg style="left:76px;top:412px" width="16" height="14" viewBox="0 0 16 14"><rect x="0.8" y="1.6" width="14.6" height="9.4" rx="3.6" fill="#dfe2e8" stroke="#4a5668" stroke-width="1.2"/><path d="M1 6.3H15" stroke="#4a5668" stroke-width="1.1"/></svg>
<div style="left:96px;top:411.1px;height:18px;line-height:18px;font-size:12px;color:#1a1a1a;white-space:nowrap;letter-spacing:-0.035px;">Periodic Condition 1</div>
<svg style="left:65px;top:432.5px" width="5" height="8" viewBox="0 0 5 8"><path d="M0.5 0.5L4 4L0.5 7.5Z" fill="#fff" stroke="#a6a6a6" stroke-width="0.9"/></svg>
<svg style="left:76px;top:429px" width="16" height="14" viewBox="0 0 16 14"><rect x="0.8" y="1.6" width="14.6" height="9.4" rx="3.6" fill="#dfe2e8" stroke="#4a5668" stroke-width="1.2"/><path d="M1 6.3H15" stroke="#4a5668" stroke-width="1.1"/></svg>
<div style="left:96px;top:428.1px;height:18px;line-height:18px;font-size:12px;color:#1a1a1a;white-space:nowrap;letter-spacing:-0.383px;">Port 1</div>
<svg style="left:65px;top:449.5px" width="5" height="8" viewBox="0 0 5 8"><path d="M0.5 0.5L4 4L0.5 7.5Z" fill="#fff" stroke="#a6a6a6" stroke-width="0.9"/></svg>
<svg style="left:76px;top:446px" width="16" height="14" viewBox="0 0 16 14"><rect x="0.8" y="1.6" width="14.6" height="9.4" rx="3.6" fill="#dfe2e8" stroke="#4a5668" stroke-width="1.2"/><path d="M1 6.3H15" stroke="#4a5668" stroke-width="1.1"/></svg>
<div style="left:96px;top:445.1px;height:18px;line-height:18px;font-size:12px;color:#1a1a1a;white-space:nowrap;letter-spacing:-0.250px;">Port 2</div>
<svg style="left:44px;top:467.5px" width="7" height="7" viewBox="0 0 7 7"><path d="M6.5 0.5V6.5H0.5Z" fill="#404040"/></svg>
<svg style="left:57px;top:463px" width="16" height="14" viewBox="0 0 16 14"><g fill="none" stroke="#555e6b" stroke-width="0.9"><path d="M8 0.5L15.5 13.5H0.5Z" fill="#e6e9ee"/><path d="M4.2 7H11.8L8 13.5L4.2 7M8 0.5L6.1 3.8H9.9L8 7L6.1 3.8M9.9 3.8L11.8 7L9.9 10.2H6.1L4.2 7M2.3 10.2H13.7M2.3 10.2L4.2 13.5L6.1 10.2M9.9 10.2L11.8 13.5L13.7 10.2"/></g></svg>
<div style="left:77px;top:462.1px;height:18px;line-height:18px;font-size:12px;color:#1a1a1a;white-space:nowrap;letter-spacing:-0.419px;">Meshes</div>
<svg style="left:64px;top:484.5px" width="7" height="7" viewBox="0 0 7 7"><path d="M6.5 0.5V6.5H0.5Z" fill="#404040"/></svg>
<svg style="left:76px;top:480px" width="16" height="14" viewBox="0 0 16 14"><g fill="none" stroke="#555e6b" stroke-width="0.9"><path d="M8 0.5L15.5 13.5H0.5Z" fill="#e6e9ee"/><path d="M4.2 7H11.8L8 13.5L4.2 7M8 0.5L6.1 3.8H9.9L8 7L6.1 3.8M9.9 3.8L11.8 7L9.9 10.2H6.1L4.2 7M2.3 10.2H13.7M2.3 10.2L4.2 13.5L6.1 10.2M9.9 10.2L11.8 13.5L13.7 10.2"/></g></svg>
<div style="left:96px;top:478.5px;height:18px;line-height:18px;font-size:12px;color:#1a1a1a;white-space:nowrap;letter-spacing:-0.224px;">Mesh 1</div>
</div>
<div style="left:389px;top:141px;width:254px;height:556px;background:#fbfcfe;border:1px solid #d9dde4;box-sizing:border-box;"></div>
<div style="left:397px;top:146.5px;height:27px;line-height:27px;font-size:21px;color:#2f4a78;white-space:nowrap;letter-spacing:-1.168px;-webkit-text-stroke:0.45px #fbfcfe;">Settings</div>
<svg style="left:616.0px;top:157.0px" width="8" height="4" viewBox="0 0 8 4"><path d="M0 0H8L4.0 4Z" fill="#c9ccd2"/></svg>
<svg style="left:631.5px;top:154.5px" width="6" height="11" viewBox="0 0 6 11"><path d="M1 0.5H5V5.5H1ZM0 6H6M3 6V10.5" stroke="#c4c8cf" fill="#c4c8cf" stroke-width="1"/></svg>
<div style="left:396px;top:177.0px;height:20px;line-height:20px;font-size:14px;color:#2e4c80;white-space:nowrap;letter-spacing:-0.164px;-webkit-text-stroke:0.25px #fbfcfe;">Electromagnetic Waves, Frequency D...</div>
<div style="left:390px;top:198px;width:253px;height:498px;overflow:hidden">
<div style="left:6px;top:-3.0px;height:18px;line-height:18px;font-size:12px;color:#1a1a1a;white-space:nowrap;letter-spacing:0.055px;">Active</div>
<div style="left:51px;top:-8px;width:112px;height:81px;background:#fff;border:1px solid #c9ccd2;box-sizing:border-box;"></div>
<div style="left:59px;top:-3.8px;height:18px;line-height:18px;font-size:12px;color:#1a1a1a;white-space:nowrap;">3</div>
<div style="left:59px;top:14.2px;height:18px;line-height:18px;font-size:12px;color:#1a1a1a;white-space:nowrap;">4</div>
<div style="left:59px;top:33.2px;height:18px;line-height:18px;font-size:12px;color:#1a1a1a;white-space:nowrap;">5</div>
<div style="left:59px;top:52.2px;height:18px;line-height:18px;font-size:12px;color:#1a1a1a;white-space:nowrap;">6</div>
<div style="left:152px;top:-7px;width:10px;height:79px;background:#f0f0f0;"></div>
<div style="left:152px;top:-7px;width:10px;height:50px;background:#c9c9c9;"></div>
<svg style="left:155px;top:63px" width="5" height="4" viewBox="0 0 5 4"><path d="M0.3 0.5L2.5 3L4.7 0.5" fill="none" stroke="#999" stroke-width="0.8"/></svg>
<svg style="left:179px;top:0px" width="15" height="11" viewBox="0 0 15 11"><rect x="0" y="0.5" width="5" height="9" fill="#e0a346"/><rect x="6.5" y="2.5" width="7.5" height="7.5" fill="#fff" stroke="#44566b" stroke-width="1"/></svg>
<svg style="left:213px;top:0px" width="13" height="11" viewBox="0 0 13 11"><rect x="0.6" y="0.6" width="11.5" height="9.5" fill="#e4ebf5" stroke="#3b5f95" stroke-width="1" stroke-dasharray="2 1.2"/><path d="M3 0L6.5 6" stroke="#8a6a45" stroke-width="1.2"/><path d="M4 6.5L7.5 4.5L9.5 9L5.5 10.5Z" fill="#e3b36d"/><path d="M7 2.5H10V8" fill="none" stroke="#3b5f95" stroke-width="1.2"/></svg>
<svg style="left:179px;top:16px" width="14" height="14" viewBox="0 0 14 14"><rect x="3.5" y="3.5" width="7" height="7" fill="#fff" stroke="#5a6a80" stroke-width="1"/><path d="M7 5V9M5 7H9" stroke="#5a6a80" stroke-width="0.9"/><path d="M7 0L5.5 2H8.5ZM7 14L5.5 12H8.5ZM0 7L2 5.5V8.5ZM14 7L12 5.5V8.5Z" fill="#5b86b8"/></svg>
<div style="left:0px;top:85px;width:235px;height:24.5px;background:#dde6f3;"></div>
<svg style="left:8px;top:92px" width="5" height="9" viewBox="0 0 5 9"><path d="M0.5 0.5L4.5 4.5L0.5 8.5Z" fill="#f4f6fa" stroke="#a8a8a8" stroke-width="0.9"/></svg>
<div style="left:29px;top:88.0px;height:19px;line-height:19px;font-size:13px;color:#1a1a1a;white-space:nowrap;letter-spacing:-0.168px;">Equation</div>
<div style="left:0px;top:112px;width:235px;height:24.5px;background:#dde6f3;"></div>
<svg style="left:7px;top:122px" width="9" height="5" viewBox="0 0 9 5"><path d="M0 0H9L4.5 5Z" fill="#444"/></svg>
<div style="left:29px;top:115.0px;height:19px;line-height:19px;font-size:13px;color:#1a1a1a;white-space:nowrap;letter-spacing:-0.073px;">Components</div>
<div style="left:0px;top:198px;width:235px;height:24.5px;background:#dde6f3;"></div>
<svg style="left:7px;top:208px" width="9" height="5" viewBox="0 0 9 5"><path d="M0.5 0.5H8.5L4.5 4.5Z" fill="#f2f6fc" stroke="#c5d6ee" stroke-width="0.8"/></svg>
<div style="left:29px;top:201.0px;height:19px;line-height:19px;font-size:13px;color:#1a1a1a;white-space:nowrap;letter-spacing:-0.248px;">Settings</div>
<div style="left:0px;top:284px;width:235px;height:24.5px;background:#dde6f3;"></div>
<svg style="left:7px;top:294px" width="9" height="5" viewBox="0 0 9 5"><path d="M0 0H9L4.5 5Z" fill="#444"/></svg>
<div style="left:29px;top:287.0px;height:19px;line-height:19px;font-size:13px;color:#1a1a1a;white-space:nowrap;letter-spacing:-0.148px;">Port Sweep Settings</div>
<div style="left:0px;top:344px;width:235px;height:24.5px;background:#dde6f3;"></div>
<svg style="left:7px;top:354px" width="9" height="5" viewBox="0 0 9 5"><path d="M0 0H9L4.5 5Z" fill="#444"/></svg>
<div style="left:29px;top:347.0px;height:19px;line-height:19px;font-size:13px;color:#1a1a1a;white-space:nowrap;letter-spacing:0.003px;">Out-of-Plane Wave Number</div>
<div style="left:0px;top:429px;width:235px;height:24.5px;background:#dde6f3;"></div>
<svg style="left:7px;top:439px" width="9" height="5" viewBox="0 0 9 5"><path d="M0 0H9L4.5 5Z" fill="#444"/></svg>
<div style="left:29px;top:432.0px;height:19px;line-height:19px;font-size:13px;color:#1a1a1a;white-space:nowrap;letter-spacing:0.105px;">Analysis Methodology</div>
<div style="left:6px;top:145.0px;height:18px;line-height:18px;font-size:12px;color:#1a1a1a;white-space:nowrap;letter-spacing:-0.028px;">Electric field components solved for:</div>
<div style="left:5px;top:167px;width:225px;height:20px;box-sizing:border-box;border:1px solid #a9a9a9;border-radius:2px;background:linear-gradient(#f5f5f5,#e4e4e4);"></div>
<div style="left:17px;top:168.0px;height:18px;line-height:18px;font-size:12px;color:#1a1a1a;white-space:nowrap;letter-spacing:0.053px;">In-plane vector</div>
<svg style="left:216px;top:175px" width="7" height="4" viewBox="0 0 7 4"><path d="M0 0H7L3.5 4Z" fill="#111"/></svg>
<div style="left:6px;top:231.0px;height:18px;line-height:18px;font-size:12px;color:#1a1a1a;white-space:nowrap;letter-spacing:-0.057px;">Formulation:</div>
<div style="left:5px;top:253px;width:225px;height:20px;box-sizing:border-box;border:1px solid #a9a9a9;border-radius:2px;background:linear-gradient(#f5f5f5,#e4e4e4);"></div>
<div style="left:17px;top:254.0px;height:18px;line-height:18px;font-size:12px;color:#1a1a1a;white-space:nowrap;letter-spacing:0.045px;">Full field</div>
<svg style="left:216px;top:261px" width="7" height="4" viewBox="0 0 7 4"><path d="M0 0H7L3.5 4Z" fill="#111"/></svg>
<div style="left:7px;top:319px;width:13px;height:13px;background:#fff;border:1px solid #333;box-sizing:border-box;"></div>
<div style="left:25px;top:316.0px;height:18px;line-height:18px;font-size:12px;color:#1a1a1a;white-space:nowrap;letter-spacing:-0.089px;">Activate port sweep</div>
<div style="left:6px;top:377.0px;height:18px;line-height:18px;font-size:12px;color:#1a1a1a;white-space:nowrap;letter-spacing:0.065px;">Out-of-plane wave number:</div>
<div style="left:7px;top:397.5px;height:19px;line-height:19px;font-size:13px;color:#1a1a1a;white-space:nowrap;font-style:italic;">k</div>
<div style="left:14px;top:403.5px;height:15px;line-height:15px;font-size:9px;color:#1a1a1a;white-space:nowrap;font-style:italic;">z</div>
<div style="left:31px;top:399px;width:156px;height:19px;background:#fff;border:1px solid #cdd0d5;box-sizing:border-box;"></div>
<div style="left:35px;top:399.0px;height:18px;line-height:18px;font-size:12px;color:#1a1a1a;white-space:nowrap;">0</div>
<div style="left:197px;top:400.0px;height:18px;line-height:18px;font-size:12px;color:#1a1a1a;white-space:nowrap;letter-spacing:0.266px;">rad/m</div>
<div style="left:6px;top:462.0px;height:18px;line-height:18px;font-size:12px;color:#1a1a1a;white-space:nowrap;letter-spacing:0.148px;">Methodology options:</div>
<div style="left:5px;top:484px;width:225px;height:20px;box-sizing:border-box;border:1px solid #a9a9a9;border-radius:2px;background:linear-gradient(#f5f5f5,#e4e4e4);"></div>
<div style="left:17px;top:485.0px;height:18px;line-height:18px;font-size:12px;color:#1a1a1a;white-space:nowrap;letter-spacing:0.058px;">Fast</div>
<svg style="left:216px;top:492px" width="7" height="4" viewBox="0 0 7 4"><path d="M0 0H7L3.5 4Z" fill="#111"/></svg>
<div style="left:235px;top:0px;width:17px;height:498px;background:#f0f0f0;"></div>
<div style="left:235px;top:113px;width:17px;height:272.5px;background:#cdcdcd;"></div>
<svg style="left:240px;top:6px" width="7" height="5" viewBox="0 0 7 5"><path d="M0.3 4.2L3.5 1L6.7 4.2" fill="none" stroke="#8a8a8a" stroke-width="1"/></svg>
<svg style="left:240px;top:487px" width="7" height="5" viewBox="0 0 7 5"><path d="M0.3 0.8L3.5 4L6.7 0.8" fill="none" stroke="#8a8a8a" stroke-width="1"/></svg>
</div>
<div style="left:648px;top:141px;width:373px;height:480px;background:#fafbfe;border:1px solid #d9dde4;box-sizing:border-box;"></div>
<div style="left:656px;top:146.5px;height:27px;line-height:27px;font-size:21px;color:#2f4a78;white-space:nowrap;letter-spacing:-1.189px;-webkit-text-stroke:0.45px #fafbfe;">Graphics</div>
<svg style="left:992.5px;top:157.0px" width="7" height="4" viewBox="0 0 7 4"><path d="M0 0H7L3.5 4Z" fill="#c4c8cf"/></svg>
<svg style="left:1009px;top:154px" width="6" height="11" viewBox="0 0 6 11"><path d="M1 0.5H5V5.5H1ZM0 6H6M3 6V10.5" stroke="#c4c8cf" fill="#c4c8cf" stroke-width="1"/></svg>
<div style="left:649px;top:214px;width:371px;height:406px;background:#ffffff;"></div>
<svg style="left:656px;top:177px" width="17" height="15" viewBox="0 0 17 15"><circle cx="5.5" cy="5.5" r="4.6" fill="#fff" stroke="#2b4770" stroke-width="1.4"/><path d="M9 9L13.2 13.2" stroke="#2b4770" stroke-width="2.2"/><path d="M3.2 5.5H7.8" stroke="#2b4770" stroke-width="1.2"/><path d="M5.5 3.2V7.8" stroke="#2b4770" stroke-width="1.2"/></svg>
<svg style="left:680px;top:177px" width="17" height="15" viewBox="0 0 17 15"><circle cx="5.5" cy="5.5" r="4.6" fill="#fff" stroke="#2b4770" stroke-width="1.4"/><path d="M9 9L13.2 13.2" stroke="#2b4770" stroke-width="2.2"/><path d="M3.2 5.5H7.8" stroke="#2b4770" stroke-width="1.2"/></svg>
<svg style="left:703px;top:177px" width="17" height="15" viewBox="0 0 17 15"><rect x="0.5" y="6.5" width="8" height="7" fill="none" stroke="#2b4770" stroke-width="1" stroke-dasharray="2 1.2"/><circle cx="8.5" cy="5.5" r="4.6" fill="#fff" stroke="#2b4770" stroke-width="1.4"/><path d="M12 9L16.2 13.2" stroke="#2b4770" stroke-width="2.2"/><path d="M6.2 5.5H10.8" stroke="#2b4770" stroke-width="1.2"/><path d="M8.5 3.2V7.8" stroke="#2b4770" stroke-width="1.2"/></svg>
<svg style="left:727px;top:176px" width="16" height="16" viewBox="0 0 16 16"><rect x="3.5" y="3.5" width="8" height="8" fill="#fff" stroke="#5a6a80"/><path d="M7.5 5V10M5 7.5H10" stroke="#44566b" stroke-width="1"/><path d="M7.5 0L5.8 2H9.2ZM7.5 15L5.8 13H9.2ZM0 7.5L2 5.8V9.2ZM15 7.5L13 5.8V9.2Z" fill="#7aa3d4"/></svg>
<svg style="left:751px;top:176px" width="16" height="16" viewBox="0 0 16 16"><rect x="0.5" y="0.5" width="14" height="14" fill="#fff" stroke="#44566b" stroke-width="1.2"/><path d="M7.5 5V10M5 7.5H10" stroke="#44566b" stroke-width="1"/><path d="M7.5 1.3L5.3 4H9.7ZM7.5 13.7L5.3 11H9.7ZM1.3 7.5L4 5.3V9.7ZM13.7 7.5L11 5.3V9.7Z" fill="#4a86cc"/></svg>
<div style="left:777px;top:178px;width:1px;height:14px;background:#d0d5dd;"></div>
<svg style="left:790px;top:176px" width="19" height="17" viewBox="0 0 19 17"><path d="M8.5 10.5V1.5M6.5 3.5L8.5 1L10.5 3.5" fill="none" stroke="#3a70b8" stroke-width="1.1"/><path d="M8.5 10.5L1.5 5.5M1.5 8V5.3H4.2" fill="none" stroke="#4aa04a" stroke-width="1.1"/><path d="M8.5 10.5L17 7.5M14.2 6.5L17.2 7.4L15.5 10" fill="none" stroke="#d0305a" stroke-width="1.1"/></svg>
<svg style="left:815.0px;top:182.0px" width="7" height="4" viewBox="0 0 7 4"><path d="M0 0H7L3.5 4Z" fill="#111"/></svg>
<div style="left:836px;top:178px;width:1px;height:14px;background:#d0d5dd;"></div>
<svg style="left:850px;top:177px" width="17" height="14" viewBox="0 0 17 14"><rect x="0.5" y="4.5" width="13" height="8.5" rx="3.5" fill="#e4e4e4" stroke="#b5b5b5"/><path d="M7 9L14 2.5L16 4.5L9 11Z" fill="#c9c9c9" stroke="#a9a9a9" stroke-width="0.7"/></svg>
<svg style="left:874px;top:178px" width="18" height="13" viewBox="0 0 18 13"><rect x="0.5" y="0.5" width="11" height="7.5" rx="3" fill="#dcdcdc" stroke="#b8b8b8"/><rect x="5.5" y="4.5" width="11" height="8" rx="3" fill="#b0b0b0" stroke="#a0a0a0"/></svg>
<div style="left:897px;top:175px;width:19px;height:19px;background:#cfe0f5;border:1px solid #5f8fc7;box-sizing:border-box;border-radius:2px;"></div>
<svg style="left:899px;top:178px" width="15" height="12" viewBox="0 0 15 12"><rect x="0.5" y="0.5" width="14" height="11" rx="3.5" fill="#1f5a9e" stroke="#1a4a85"/></svg>
<svg style="left:922px;top:178px" width="17" height="13" viewBox="0 0 17 13"><rect x="0.5" y="0.5" width="15" height="11" rx="4" fill="#ececec" stroke="#b0b0b0"/><path d="M0.5 6H15.5" stroke="#b0b0b0"/></svg>
<svg style="left:946px;top:178px" width="17" height="13" viewBox="0 0 17 13"><rect x="0.5" y="0.5" width="15" height="11" rx="4" fill="#ececec" stroke="#b0b0b0"/><path d="M0.5 4H15.5M0.5 8H15.5" stroke="#b0b0b0"/></svg>
<svg style="left:971px;top:177px" width="15" height="14" viewBox="0 0 15 14"><rect x="1.5" y="1.5" width="12" height="10" fill="#9aa5b5" stroke="#5a6575"/><path d="M0.5 0.5L14.5 13.5" stroke="#3a4a60" stroke-width="1.4"/></svg>
<div style="left:996px;top:178px;width:1px;height:14px;background:#d0d5dd;"></div>
<svg style="left:655px;top:196px" width="17" height="13" viewBox="0 0 17 13"><rect x="0.5" y="3.5" width="15" height="8.5" rx="3.2" fill="#e6e9ee" stroke="#8a95a5"/><path d="M1 8.5H15" stroke="#b5bcc8" stroke-width="1"/><rect x="5.5" y="0.5" width="8" height="6" fill="#1f5a9e" stroke="#fff" stroke-width="0.5"/><rect x="5" y="0.5" width="9" height="6.5" fill="none" stroke="#2b4770" stroke-width="1" stroke-dasharray="2 1.2"/></svg>
<svg style="left:679px;top:196px" width="17" height="13" viewBox="0 0 17 13"><rect x="0.5" y="3" width="15" height="9.5" rx="3.5" fill="#2f4466" stroke="#2a3c5a"/><rect x="5.5" y="0.8" width="8" height="5.7" fill="#dfe5ee"/><rect x="5" y="0.5" width="9" height="6.5" fill="none" stroke="#555" stroke-width="1" stroke-dasharray="2 1.2"/></svg>
<svg style="left:704px;top:197px" width="15" height="15" viewBox="0 0 15 15"><rect x="0.7" y="0.7" width="13" height="13" fill="#f4f7fb" stroke="#3b5f95" stroke-width="1.1" stroke-dasharray="3 1.6"/><rect x="3.5" y="3.5" width="7" height="6.5" fill="#8fb0dc"/><path d="M6.5 6L13.5 9L11 10L14.5 14L13.2 15L9.8 11L8 12.8Z" fill="#3a68a8"/></svg>
<svg style="left:728px;top:195px" width="15" height="17" viewBox="0 0 15 17"><rect x="0.7" y="2.7" width="13" height="13" fill="#f4f7fb" stroke="#3b5f95" stroke-width="1.1" stroke-dasharray="3 1.6"/><rect x="5" y="5.5" width="6.5" height="7" fill="#6f96cc"/><path d="M0.8 0.8L5.5 10" stroke="#8a6a45" stroke-width="1.5"/><path d="M3.8 10L7 8.5L9.5 15.5L4.5 16.5Z" fill="#e9c79a" stroke="#c09a62" stroke-width="0.6"/></svg>
<div style="left:753px;top:198px;width:1px;height:14px;background:#d0d5dd;"></div>
<svg style="left:767px;top:198px" width="17" height="12" viewBox="0 0 17 12"><path d="M1 6.5C4.1499999999999995 2.7 11.850000000000001 2.7 15 6.5C11.850000000000001 10.3 4.1499999999999995 10.3 1 6.5Z" fill="#c2c5ca"/><circle cx="8" cy="6.5" r="1.5" fill="#9a9da2"/><path d="M3 0.5L14.5 10.5" stroke="#44566b" stroke-width="1.2"/></svg>
<div style="left:790px;top:194px;width:19px;height:21px;background:#cfe0f5;border:1px solid #4f7fbb;box-sizing:border-box;border-radius:2px;border-top-width:2px;border-bottom-width:2px;"></div>
<svg style="left:792px;top:198px" width="15" height="13" viewBox="0 0 15 13"><rect x="0.5" y="0.5" width="14" height="12" fill="#fff" stroke="#2b4770"/><rect x="0.5" y="0.5" width="14" height="1.8" fill="#2b4770"/><path d="M2.5 7.3C4.75 4.5 10.25 4.5 12.5 7.3C10.25 10.1 4.75 10.1 2.5 7.3Z" fill="#2b4770"/><circle cx="7.5" cy="7.3" r="1.5" fill="#7f9ac0"/></svg>
<svg style="left:815px;top:198px" width="17" height="13" viewBox="0 0 17 13"><rect x="0.5" y="0.5" width="15" height="12" fill="#fff" stroke="#2b4770"/><rect x="0.5" y="0.5" width="15" height="1.8" fill="#2b4770"/><path d="M3 7.3C5.25 4.699999999999999 10.75 4.699999999999999 13 7.3C10.75 9.9 5.25 9.9 3 7.3Z" fill="#c2c5ca"/><circle cx="8" cy="7.3" r="1.5" fill="#9a9da2"/><path d="M4.5 4L11.5 10.5" stroke="#44566b" stroke-width="1.1"/></svg>
<svg style="left:839px;top:198px" width="17" height="13" viewBox="0 0 17 13"><rect x="0.5" y="0.5" width="15" height="12" fill="#fff" stroke="#2b4770"/><rect x="0.5" y="0.5" width="15" height="1.8" fill="#2b4770"/><path d="M3.8 5.3C5.6899999999999995 3.0999999999999996 10.31 3.0999999999999996 12.2 5.3C10.31 7.5 5.6899999999999995 7.5 3.8 5.3Z" fill="#2b4770"/><circle cx="8" cy="5.3" r="1.5" fill="#7f9ac0"/><path d="M3.8 9.8C5.6899999999999995 7.800000000000001 10.31 7.800000000000001 12.2 9.8C10.31 11.8 5.6899999999999995 11.8 3.8 9.8Z" fill="#c2c5ca"/><circle cx="8" cy="9.8" r="1.5" fill="#9a9da2"/><path d="M5 8L11 11.8" stroke="#6a7585" stroke-width="1"/></svg>
<svg style="left:864px;top:198px" width="13" height="13" viewBox="0 0 13 13"><path d="M3.5 4.5A4.6 4.6 0 1 1 3 9.5" fill="none" stroke="#44566b" stroke-width="1.4"/><path d="M0.5 1.5L1.5 6.5L6 4.5Z" fill="#44566b"/></svg>
<div style="left:889px;top:198px;width:1px;height:14px;background:#d0d5dd;"></div>
<svg style="left:903px;top:198px" width="18" height="13" viewBox="0 0 18 13"><path d="M0.5 2.5H4.5L6 0.5H12L13.5 2.5H17.5V12.5H0.5Z" fill="#4a80c0"/><circle cx="9" cy="7.3" r="3.3" fill="#fff"/><circle cx="9" cy="7.3" r="1.9" fill="#4a80c0"/></svg>
<svg style="left:928px;top:196px" width="16" height="16" viewBox="0 0 16 16"><rect x="3" y="0.5" width="10" height="6" fill="#fff" stroke="#4a80c0"/><rect x="0.5" y="6" width="15" height="7" rx="1" fill="#4a80c0"/><rect x="3" y="10.5" width="10" height="5" fill="#fff" stroke="#4a80c0"/><circle cx="13" cy="8" r="0.8" fill="#fff"/></svg>
<svg style="left:0;top:0" width="1024" height="768" viewBox="0 0 1024 768"><rect x="728.5" y="241.5" width="253" height="339" fill="#8c8cf0" stroke="#0e0eb0" stroke-width="1"/><path d="M798.5 439.5V302.5A4 4 0 0 1 802.5 298.5H907.5A4 4 0 0 1 911.5 302.5V439.5" fill="none" stroke="#0e0eb0" stroke-width="1"/><path d="M798.5 326.5H911.5M728.5 410.5H798.5M911.5 410.5H981.5M728.5 439.5H981.5M728.5 506.5H981.5" fill="none" stroke="#0e0eb0" stroke-width="1"/><path d="M699.5 224.5H1011.5V596.5H699.5Z" fill="none" stroke="#000" stroke-width="1"/><path d="M692 247.5H699M1012 247.5H1020M692 275.5H699M1012 275.5H1020M692 303.5H699M1012 303.5H1020M692 331.5H699M1012 331.5H1020M692 359.5H699M1012 359.5H1020M692 388.5H699M1012 388.5H1020M692 416.5H699M1012 416.5H1020M692 444.5H699M1012 444.5H1020M692 472.5H699M1012 472.5H1020M692 500.5H699M1012 500.5H1020M692 528.5H699M1012 528.5H1020M692 556.5H699M1012 556.5H1020M692 584.5H699M1012 584.5H1020M742.5 217V224M742.5 597V604M799.5 217V224M799.5 597V604M855.5 217V224M855.5 597V604M911.5 217V224M911.5 597V604M968.5 217V224M968.5 597V604" stroke="#000" stroke-width="1" fill="none"/><path d="M694 434.5L699.5 439.5L694 444.5Z" fill="#000"/><path d="M693.5 602L699.5 596L705.5 602Z" fill="#000"/></svg>
<div style="left:391px;width:300px;text-align:right;top:245.0px;height:18px;line-height:18px;font-size:12px;color:#000;white-space:nowrap;letter-spacing:0.9px;">400</div>
<div style="left:391px;width:300px;text-align:right;top:273.1px;height:18px;line-height:18px;font-size:12px;color:#000;white-space:nowrap;letter-spacing:0.9px;">350</div>
<div style="left:391px;width:300px;text-align:right;top:301.3px;height:18px;line-height:18px;font-size:12px;color:#000;white-space:nowrap;letter-spacing:0.9px;">300</div>
<div style="left:391px;width:300px;text-align:right;top:329.4px;height:18px;line-height:18px;font-size:12px;color:#000;white-space:nowrap;letter-spacing:0.9px;">250</div>
<div style="left:391px;width:300px;text-align:right;top:357.5px;height:18px;line-height:18px;font-size:12px;color:#000;white-space:nowrap;letter-spacing:0.9px;">200</div>
<div style="left:391px;width:300px;text-align:right;top:385.7px;height:18px;line-height:18px;font-size:12px;color:#000;white-space:nowrap;letter-spacing:0.9px;">150</div>
<div style="left:391px;width:300px;text-align:right;top:413.8px;height:18px;line-height:18px;font-size:12px;color:#000;white-space:nowrap;letter-spacing:0.9px;">100</div>
<div style="left:391px;width:300px;text-align:right;top:441.9px;height:18px;line-height:18px;font-size:12px;color:#000;white-space:nowrap;letter-spacing:0.9px;">50</div>
<div style="left:391px;width:300px;text-align:right;top:470.0px;height:18px;line-height:18px;font-size:12px;color:#000;white-space:nowrap;letter-spacing:0.9px;">0</div>
<div style="left:391px;width:300px;text-align:right;top:498.2px;height:18px;line-height:18px;font-size:12px;color:#000;white-space:nowrap;letter-spacing:0.9px;">-50</div>
<div style="left:391px;width:300px;text-align:right;top:526.3px;height:18px;line-height:18px;font-size:12px;color:#000;white-space:nowrap;letter-spacing:0.9px;">-100</div>
<div style="left:391px;width:300px;text-align:right;top:554.4px;height:18px;line-height:18px;font-size:12px;color:#000;white-space:nowrap;letter-spacing:0.9px;">-150</div>
<div style="left:391px;width:300px;text-align:right;top:582.6px;height:18px;line-height:18px;font-size:12px;color:#000;white-space:nowrap;letter-spacing:0.9px;">-200</div>
<div style="left:743px;top:602.0px;height:18px;line-height:18px;font-size:12px;color:#000;white-space:nowrap;letter-spacing:0.9px;">-200</div>
<div style="left:799px;top:602.0px;height:18px;line-height:18px;font-size:12px;color:#000;white-space:nowrap;letter-spacing:0.9px;">-100</div>
<div style="left:855px;top:602.0px;height:18px;line-height:18px;font-size:12px;color:#000;white-space:nowrap;letter-spacing:0.9px;">0</div>
<div style="left:912px;top:602.0px;height:18px;line-height:18px;font-size:12px;color:#000;white-space:nowrap;letter-spacing:0.9px;">100</div>
<div style="left:968px;top:602.0px;height:18px;line-height:18px;font-size:12px;color:#000;white-space:nowrap;letter-spacing:0.9px;">200</div>
<div style="left:704px;top:224.0px;height:18px;line-height:18px;font-size:12px;color:#000;white-space:nowrap;letter-spacing:0.6px;">nm</div>
<div style="left:990px;top:580.0px;height:18px;line-height:18px;font-size:12px;color:#000;white-space:nowrap;letter-spacing:0.6px;">nm</div>
<svg style="left:985px;top:230px" width="22" height="20" viewBox="0 0 22 20"><defs><linearGradient id="lg2" x1="0" y1="0.5" x2="1" y2="0.5"><stop offset="0" stop-color="#f5e050"/><stop offset="0.45" stop-color="#5a8fd8"/><stop offset="1" stop-color="#16246a"/></linearGradient></defs><path d="M1 4L18 0.5L21 15L5 19.5Z" fill="#e2e5ea"/><path d="M3 6L17 3L19 14L6 17Z" fill="#cfd4dc"/><rect x="5.5" y="4.5" width="12.5" height="10" rx="2.5" fill="url(#lg2)" stroke="#16246a" stroke-width="1.6"/></svg>
<div style="left:648px;top:626px;width:373px;height:71px;background:#fafbfe;border:1px solid #d9dde4;box-sizing:border-box;"></div>
<div style="left:722px;top:655px;width:296px;height:1px;background:#c9d3e0;"></div>
<div style="left:653px;top:632px;width:69px;height:25px;background:#fcfdfe;border:1px solid #c9d3e0;box-sizing:border-box;border-bottom:none;"></div>
<div style="left:659px;top:635.5px;height:19px;line-height:19px;font-size:13px;color:#3a5f95;white-space:nowrap;letter-spacing:-0.283px;">Messages</div>
<div style="left:730px;top:632px;width:60px;height:22px;background:#e9e9e9;"></div>
<div style="left:734px;top:634.5px;height:19px;line-height:19px;font-size:13px;color:#1a1a1a;white-space:nowrap;letter-spacing:-0.129px;">Progress</div>
<div style="left:798px;top:632px;width:30px;height:22px;background:#e9e9e9;"></div>
<div style="left:802px;top:634.5px;height:19px;line-height:19px;font-size:13px;color:#1a1a1a;white-space:nowrap;letter-spacing:-0.234px;">Log</div>
<div style="left:836px;top:632px;width:87px;height:22px;background:#e9e9e9;"></div>
<div style="left:840px;top:634.5px;height:19px;line-height:19px;font-size:13px;color:#1a1a1a;white-space:nowrap;letter-spacing:-0.228px;">Evaluation 2D</div>
<svg style="left:979.5px;top:643.0px" width="7" height="4" viewBox="0 0 7 4"><path d="M0 0H7L3.5 4Z" fill="#c4c8cf"/></svg>
<svg style="left:994px;top:640px" width="6" height="11" viewBox="0 0 6 11"><path d="M1 0.5H5V5.5H1ZM0 6H6M3 6V10.5" stroke="#c4c8cf" fill="#c4c8cf" stroke-width="1"/></svg>
<svg style="left:1008px;top:641px" width="9" height="9" viewBox="0 0 9 9"><path d="M0.5 0.5L8.5 8.5M8.5 0.5L0.5 8.5" stroke="#c4c8cf" stroke-width="1.1"/></svg>
<svg style="left:658px;top:663px" width="11" height="16" viewBox="0 0 11 16"><path d="M2 0.5L5 8" stroke="#44566b" stroke-width="1.6"/><path d="M2.5 8.5L6.5 6.5L9.5 13L4.5 15Z" fill="#e9c08a" stroke="#b98742" stroke-width="0.7"/></svg>
<div style="left:653px;top:684px;width:363px;height:8px;background:#f0f0f0;border:1px solid #dcdcdc;box-sizing:border-box;"></div>
<div style="left:671px;top:685px;width:187px;height:6px;background:#cdcdcd;"></div>
<div style="left:0px;top:701px;width:1024px;height:27px;background:#f1eeee;"></div>
<div style="left:312px;top:708.0px;height:18px;line-height:18px;font-size:12px;color:#1a1a1a;white-space:nowrap;letter-spacing:-0.446px;">122 MB | 1961 MB</div>
<div style="left:0px;top:728px;width:1024px;height:40px;background:linear-gradient(90deg,#051d2a 0%,#04141f 50%,#061127 78%,#0a1532 100%);"></div>
<div style="left:198px;top:728px;width:44px;height:40px;background:#37474f;"></div>
<div style="left:242px;top:728px;width:4px;height:40px;background:#1c2d38;"></div>
<div style="left:55px;top:766px;width:40px;height:2px;background:#79b8ea;"></div>
<div style="left:86px;top:766px;width:1px;height:2px;background:#051a28;"></div>
<div style="left:104px;top:766px;width:40px;height:2px;background:#79b8ea;"></div>
<div style="left:135px;top:766px;width:1px;height:2px;background:#051a28;"></div>
<div style="left:153px;top:766px;width:40px;height:2px;background:#79b8ea;"></div>
<div style="left:184px;top:766px;width:1px;height:2px;background:#051a28;"></div>
<div style="left:250px;top:766px;width:40px;height:2px;background:#79b8ea;"></div>
<div style="left:281px;top:766px;width:1px;height:2px;background:#051a28;"></div>
<div style="left:299px;top:766px;width:40px;height:2px;background:#79b8ea;"></div>
<div style="left:330px;top:766px;width:1px;height:2px;background:#051a28;"></div>
<div style="left:348px;top:766px;width:40px;height:2px;background:#79b8ea;"></div>
<div style="left:379px;top:766px;width:1px;height:2px;background:#051a28;"></div>
<div style="left:397px;top:766px;width:40px;height:2px;background:#79b8ea;"></div>
<div style="left:428px;top:766px;width:1px;height:2px;background:#051a28;"></div>
<div style="left:446px;top:766px;width:40px;height:2px;background:#79b8ea;"></div>
<div style="left:477px;top:766px;width:1px;height:2px;background:#051a28;"></div>
<div style="left:198px;top:766px;width:44px;height:2px;background:#79b8ea;"></div>
<svg style="left:16px;top:740px" width="17" height="17" viewBox="0 0 17 17"><path d="M0 2.4L7 1.4V8H0ZM8 1.25L17 0V8H8ZM0 9H7V15.6L0 14.6ZM8 9H17V17L8 15.75Z" fill="#fff"/></svg>
<svg style="left:63px;top:738px" width="24" height="20" viewBox="0 0 24 20"><path d="M0.5 2.5Q0.5 1 2 1H8L10 3H22Q23.5 3 23.5 4.5V18H0.5Z" fill="#f2b632"/><path d="M0.5 5H23.5V18.5Q23.5 19.5 22.5 19.5H1.5Q0.5 19.5 0.5 18.5Z" fill="#fbd667"/><path d="M6 19.5V12.5Q6 11.5 7 11.5H17Q18 11.5 18 12.5V19.5H15V15H9V19.5Z" fill="#4a9ae0"/></svg>
<svg style="left:111px;top:736px" width="26" height="25" viewBox="0 0 26 25"><defs><linearGradient id="eg1" x1="0" y1="0" x2="1" y2="1"><stop offset="0" stop-color="#35c1f1"/><stop offset="0.6" stop-color="#1a7fd6"/><stop offset="1" stop-color="#0c59a4"/></linearGradient><linearGradient id="eg2" x1="0" y1="0" x2="1" y2="0.3"><stop offset="0" stop-color="#2bc0e8"/><stop offset="1" stop-color="#6ad653"/></linearGradient></defs><circle cx="13" cy="12.5" r="12" fill="url(#eg1)"/><path d="M1.5 10C3 3 9 0.5 13.5 0.5C21 0.5 25.5 6.5 25 12C24.5 15 22 16.5 19.5 16C21 13 19 9 14.5 8.5C9 8 4 11 1.5 10Z" fill="url(#eg2)"/><path d="M9 14C9 11 11.5 9.5 14 9.5C17 9.5 19 12 18 15C17 17 18.5 19.5 22 18C20 22 16 23.5 13 22.5C10 21.5 9 17.5 9 14Z" fill="#051a28" opacity="0.85"/><path d="M4 13C5 19 9 23 14 23.5C9.5 24.5 2.5 21 2 13.5Z" fill="#0c4f96"/></svg>
<svg style="left:161px;top:737px" width="26" height="25" viewBox="0 0 26 25"><circle cx="12" cy="12" r="11.5" fill="#fff"/><path d="M12 12L2.04 6.25A11.5 11.5 0 0 1 21.96 6.25Z" fill="#e04a3a"/><path d="M12 12L21.96 6.25A11.5 11.5 0 0 1 12 23.5Z" fill="#f7c52e"/><path d="M12 12L12 23.5A11.5 11.5 0 0 1 2.04 6.25Z" fill="#2fa04e"/><path d="M2.04 6.25A11.5 11.5 0 0 1 21.96 6.25H12Z" fill="#e04a3a"/><circle cx="12" cy="12" r="5.3" fill="#fff"/><circle cx="12" cy="12" r="4.2" fill="#4a8af0"/><circle cx="18.5" cy="17.5" r="7" fill="#0e5a44"/><text x="18.5" y="21" font-size="9.5" font-weight="bold" fill="#fff" text-anchor="middle" font-family="Liberation Sans">A</text></svg>
<svg style="left:209px;top:737px" width="26" height="22" viewBox="0 0 26 22"><defs><linearGradient id="lg3" x1="0" y1="0.5" x2="1" y2="0.5"><stop offset="0" stop-color="#f8e24a"/><stop offset="0.35" stop-color="#8ab0e0"/><stop offset="1" stop-color="#14226e"/></linearGradient></defs><path d="M1 5L20 0.5L25.5 14L7 21.5Z" fill="#eceef2"/><path d="M3 9L19 4L22 14L8 19Z" fill="#cdd2dc"/><rect x="7.5" y="5.5" width="13.5" height="10.5" rx="2.5" fill="url(#lg3)" stroke="#14226e" stroke-width="1.6"/></svg>
<svg style="left:264px;top:739px" width="15" height="19" viewBox="0 0 15 19"><path d="M0.5 0.5H10L14.5 5V18.5H0.5Z" fill="#fff"/><path d="M10 0.5V5H14.5Z" fill="#c9d3e0"/><rect x="3" y="8" width="9" height="8" fill="#2f7fd0"/><path d="M3 16L6.5 11.5L9 14L10.5 12.5L12 14V16Z" fill="#bfe0ff"/></svg>
<svg style="left:308px;top:738px" width="23" height="21" viewBox="0 0 23 21"><path d="M6 1.5L21 0.5L18 19L1.5 20.5Z" fill="#cfe6ee"/><path d="M6 1.5L21 0.5L20.3 4L5.3 5.2Z" fill="#7fb5c9"/><path d="M5.5 8L18.5 7M5 11L18 10M4.3 14L17.5 13M3.8 17L14 16.3" stroke="#8ab0bd" stroke-width="0.9"/><path d="M18 19L22 16V3L21 0.5Z" fill="#9fc5d2"/></svg>
<svg style="left:357px;top:738px" width="26" height="21" viewBox="0 0 26 21"><path d="M0.5 12.5L7 9.5L10.5 12.5L6.5 16Z" fill="#3a70b0"/><path d="M7 9.5C10 7 12 1.5 15.5 0.5C17.5 0.5 19 5 21 10C22.5 14 24 16.5 25.5 18C22 17 19.5 18.5 17 20.5C15 17.5 12.5 14.5 10.5 12.5Z" fill="#d9572a"/><path d="M15.5 0.5C17.5 0.5 19 5 21 10C22.5 14 24 16.5 25.5 18C22 16 19 11 15.5 0.5Z" fill="#a8321a"/><path d="M10.5 12.5C12.5 14.5 15 17.5 17 20.5C13 18 9.5 17 6.5 16Z" fill="#f0a24a"/></svg>
<svg style="left:406px;top:737px" width="24" height="23" viewBox="0 0 24 23"><rect x="9" y="2.5" width="14" height="18" rx="1" fill="#fff" stroke="#d35230" stroke-width="1.2"/><path d="M13 7H20.5M13 10.5H20.5M13 14H20.5" stroke="#d35230" stroke-width="1.6"/><path d="M0.5 2.5L13.5 0.3V22.7L0.5 20.5Z" fill="#d04727"/><text x="7" y="16" font-size="12" font-weight="bold" fill="#fff" text-anchor="middle" font-family="Liberation Sans">P</text></svg>
<svg style="left:456px;top:737px" width="23" height="23" viewBox="0 0 23 23"><rect x="0.5" y="0.5" width="22" height="22" rx="1.5" fill="#2a8ae8"/><rect x="0.5" y="0.5" width="22" height="11" fill="#5ab0ff"/><path d="M0.5 22.5V15L8 8.5L15 16L18 13L22.5 17.5V22.5Z" fill="#0c4f9e"/><path d="M0.5 22.5V15L8 8.5L14 22.5Z" fill="#1a6ed0"/></svg>
<svg style="left:841px;top:743px" width="13" height="8" viewBox="0 0 13 8"><path d="M0.7 7L6.5 1.2L12.3 7" fill="none" stroke="#fff" stroke-width="1.4"/></svg>
<svg style="left:862px;top:741px" width="18" height="15" viewBox="0 0 18 15"><rect x="5.5" y="1.5" width="11.5" height="8.5" fill="none" stroke="#fff" stroke-width="1.1"/><path d="M11 10V13M7 13.5H15" stroke="#fff" stroke-width="1.1"/><rect x="0.5" y="0.5" width="5" height="4.5" fill="#051a28" stroke="#fff" stroke-width="1"/><path d="M3 5V11.5H7" fill="none" stroke="#fff" stroke-width="1"/></svg>
<svg style="left:886px;top:741px" width="18" height="14" viewBox="0 0 18 14"><path d="M0.7 4.5H3.5L7 1V13L3.5 9.5H0.7Z" fill="none" stroke="#fff" stroke-width="1.1"/><path d="M9.5 4.5Q11 7 9.5 9.5" fill="none" stroke="#fff" stroke-width="1"/><path d="M12 2.5Q14.8 7 12 11.5" fill="none" stroke="#b0b8c0" stroke-width="1"/><path d="M14.5 0.8Q18.5 7 14.5 13.2" fill="none" stroke="#6a7680" stroke-width="1"/></svg>
<div style="left:914px;top:730.0px;height:18px;line-height:18px;font-size:12px;color:#fff;white-space:nowrap;letter-spacing:-0.225px;">11:37 AM</div>
<div style="left:913px;top:747.0px;height:18px;line-height:18px;font-size:12px;color:#fff;white-space:nowrap;letter-spacing:-0.151px;">5/12/2020</div>
<svg style="left:983px;top:740px" width="16" height="16" viewBox="0 0 16 16"><path d="M0.5 0.5H15.5V11.5H5.5L2 15V11.5H0.5Z" fill="#fff"/><path d="M3 3.5H13M3 6H13M3 8.5H10" stroke="#051a28" stroke-width="1"/></svg>
<svg style="left:991px;top:747px" width="16" height="16" viewBox="0 0 16 16"><circle cx="8" cy="8" r="7.3" fill="#3a4650" stroke="#051a28" stroke-width="1"/><text x="8" y="12" font-size="11" fill="#fff" text-anchor="middle" font-family="Liberation Sans">1</text></svg>
<div style="left:1019px;top:728px;width:1px;height:40px;background:#5a6a75;"></div>
</body></html>
